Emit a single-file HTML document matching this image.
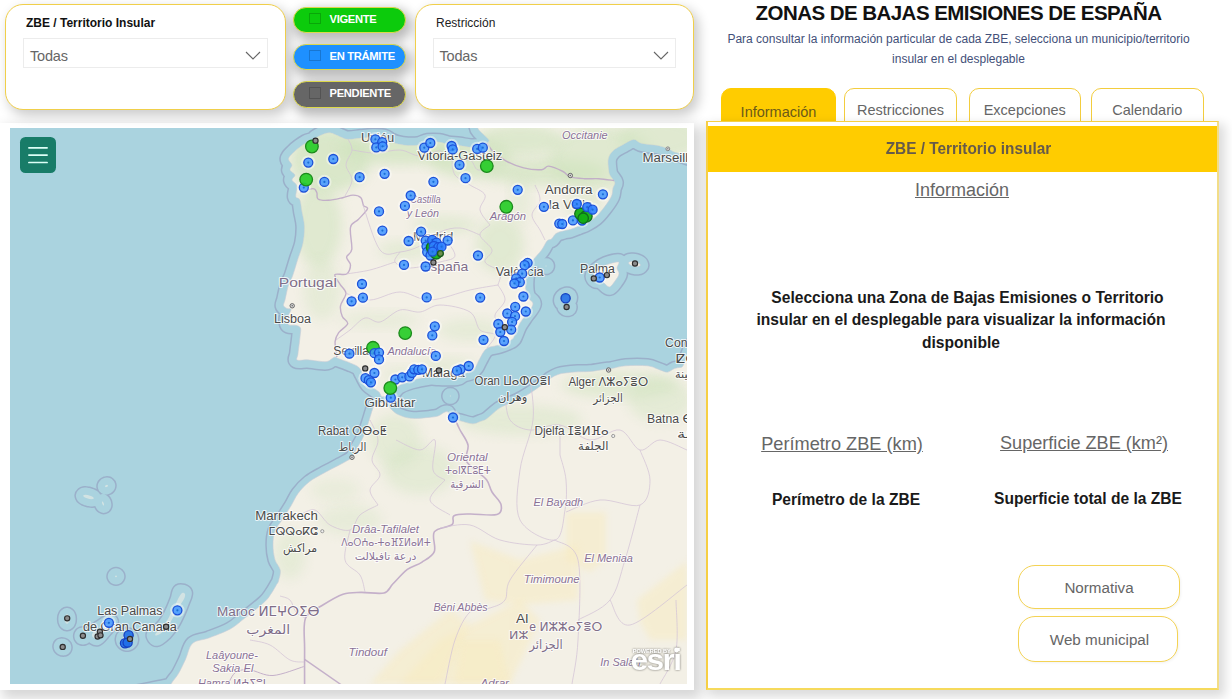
<!DOCTYPE html>
<html lang="es">
<head>
<meta charset="utf-8">
<title>Zonas de Bajas Emisiones de España</title>
<style>
*{box-sizing:border-box;margin:0;padding:0}
html,body{width:1232px;height:699px;overflow:hidden;background:#fff;font-family:"Liberation Sans",sans-serif}
.abs{position:absolute}
.box{position:absolute;background:#fff;border:1px solid #f0cf4a;border-radius:18px;box-shadow:4px 5px 12px 1px rgba(0,0,0,.2)}
.lbl{position:absolute;font-size:12px;color:#111;white-space:nowrap}
.dd{position:absolute;border:1px solid #ececec;background:#fff;height:30px}
.dd span{position:absolute;left:6px;top:9.2px;font-size:14.5px;color:#666;letter-spacing:-0.2px}
.dd svg{position:absolute;right:6px;top:12.5px}
.pill{position:absolute;left:293px;width:113px;height:26.5px;border-radius:13.5px;border:1px solid #dcd84a;box-shadow:3px 5px 11px 3px rgba(0,0,0,.27);color:#fff;font-weight:bold;font-size:11.2px;letter-spacing:-0.3px;line-height:23px;padding-left:35.5px;white-space:nowrap}
.pill i{position:absolute;left:15px;top:5px;width:12px;height:11.5px;border:1px solid rgba(0,0,0,.18)}
#title{position:absolute;left:706px;width:505px;top:0px;text-align:center;font-weight:bold;font-size:20.5px;letter-spacing:-0.55px;color:#111;white-space:nowrap;line-height:26px}
#sub{position:absolute;left:706px;width:505px;top:30px;text-align:center;font-size:12px;color:#435079;line-height:19.5px;white-space:nowrap}
.tab{position:absolute;top:87.5px;height:40px;border:1px solid #f3cd3e;border-radius:10px 10px 0 0;background:#fff;color:#666;font-size:14.5px;text-align:center;line-height:42px;white-space:nowrap}
.tab.on{background:#ffcc00;border-color:#ffcc00;line-height:46px;color:#6b5a1a}
#panel{position:absolute;left:706px;top:121.3px;width:513.2px;height:568.6px;border:2px solid #f6cf45;border-top-width:1px;border-right-color:#f2dd88;border-bottom-color:#f6da5c;background:#fff;box-shadow:4px 5px 10px 2px rgba(0,0,0,.14)}
#hdr{position:absolute;left:0;top:3.9px;width:509.2px;height:46.3px;background:#ffcc00;color:#665a4a;font-weight:bold;font-size:17px;text-align:center;line-height:45px}
#hdr span{display:inline-block;transform:scaleX(.905);position:relative;left:5.6px}
.u{position:absolute;color:#666;text-decoration:underline;white-space:nowrap;text-align:center}
.b{position:absolute;color:#1a1a1a;font-weight:bold;white-space:nowrap;text-align:center;font-size:15.6px}
.btn{position:absolute;border:1px solid #f4d354;border-radius:17px;background:#fff;color:#666;font-size:15.2px;text-align:center;box-shadow:1px 1px 3px rgba(0,0,0,.05)}
#mapframe{position:absolute;left:0;top:122.5px;width:694px;height:567.5px;background:#fff;box-shadow:5px 6px 12px 3px rgba(0,0,0,.16)}
#map{position:absolute;left:10px;top:128px;width:677px;height:556px;background:#aad3df;overflow:hidden}
</style>
</head>
<body>
<div id="mapframe"></div>
<div id="map">
<svg id="msvg" width="677" height="556" viewBox="10 128 677 556" style="position:absolute;left:0;top:0;font-family:'Liberation Sans','Noto Sans CJK SC',sans-serif">
<!--MAP-->
<defs><filter id="bl" x="-30%" y="-30%" width="160%" height="160%"><feGaussianBlur stdDeviation="6"/></filter><filter id="bl2" x="-30%" y="-30%" width="160%" height="160%"><feGaussianBlur stdDeviation="3"/></filter><clipPath id="landclip"><path d="M494.0,120.0 C458.8,123.5 491.0,136.7 489.0,141.0 C487.0,145.3 485.0,145.0 482.0,146.0 C479.0,147.0 474.8,147.3 471.0,147.2 C467.2,147.1 463.3,146.0 459.5,145.5 C455.7,145.0 451.4,144.9 448.0,144.3 C444.6,143.7 442.3,142.4 439.0,142.0 C435.7,141.6 431.4,141.5 428.0,142.0 C424.6,142.5 421.9,144.4 418.6,145.0 C415.3,145.6 411.6,145.7 408.0,145.5 C404.4,145.3 400.0,144.6 397.0,143.8 C394.0,143.1 392.2,142.1 390.0,141.0 C387.8,139.9 387.0,138.2 384.0,137.5 C381.0,136.8 375.8,136.9 372.0,137.0 C368.2,137.1 365.0,137.6 361.0,138.0 C357.0,138.4 351.5,139.5 348.0,139.3 C344.5,139.1 343.0,137.8 340.0,136.7 C337.0,135.6 333.0,133.1 330.0,132.8 C327.0,132.5 324.3,133.8 322.0,134.7 C319.7,135.6 317.5,137.0 316.0,138.0 C314.5,139.0 314.6,139.8 312.9,140.6 C311.2,141.4 308.1,141.9 306.0,143.0 C303.9,144.1 302.0,145.5 300.0,147.0 C298.0,148.5 295.9,150.0 294.0,152.0 C292.1,154.0 288.8,156.6 288.5,158.8 C288.2,161.0 291.8,163.1 292.0,165.0 C292.2,166.9 289.5,168.3 290.0,170.0 C290.5,171.7 294.7,173.3 295.0,175.0 C295.3,176.7 291.7,178.2 292.0,180.0 C292.3,181.8 296.4,183.2 297.0,186.0 C297.6,188.8 295.3,194.3 295.8,196.6 C296.3,198.9 298.9,197.4 299.9,200.0 C300.9,202.6 301.2,207.7 302.0,212.0 C302.8,216.3 304.2,220.8 304.4,226.0 C304.6,231.2 304.1,237.3 303.0,243.0 C301.9,248.7 299.2,254.5 297.5,260.0 C295.8,265.5 294.1,271.6 292.6,275.8 C291.1,280.0 289.5,282.1 288.5,285.0 C287.5,287.9 287.1,290.5 286.5,293.0 C285.9,295.5 285.5,297.9 285.0,300.0 C284.5,302.1 283.2,304.1 283.5,305.5 C283.8,306.9 285.8,307.8 287.0,308.5 C288.2,309.2 290.8,308.2 291.0,309.5 C291.2,310.8 288.6,314.0 288.0,316.0 C287.4,318.0 287.1,320.0 287.3,321.5 C287.5,323.0 287.6,324.4 289.0,325.0 C290.4,325.6 294.1,324.8 296.0,325.3 C297.9,325.8 299.8,326.4 300.5,328.0 C301.2,329.6 300.4,332.5 300.2,335.0 C300.0,337.5 299.7,339.8 299.3,343.0 C298.9,346.2 298.2,351.5 297.9,354.4 C297.5,357.2 295.6,359.2 297.2,360.1 C298.8,361.0 303.9,359.7 307.2,359.8 C310.5,359.9 313.9,360.7 317.2,361.0 C320.5,361.3 324.3,362.1 327.2,361.5 C330.1,360.9 332.5,357.7 334.4,357.2 C336.3,356.7 336.1,357.8 338.7,358.7 C341.3,359.6 346.7,361.5 350.0,362.9 C353.3,364.3 356.5,365.3 358.7,367.2 C360.9,369.1 361.3,371.5 363.0,374.4 C364.7,377.3 366.1,381.5 368.7,384.4 C371.3,387.3 376.4,389.7 378.7,391.8 C381.0,393.9 380.3,396.6 382.4,396.8 C384.5,397.1 388.6,395.1 391.3,393.3 C394.0,391.5 395.2,388.1 398.5,386.0 C401.8,383.9 405.9,382.2 411.0,380.7 C416.1,379.2 424.2,377.6 428.9,377.0 C433.5,376.4 434.2,377.2 438.9,377.3 C443.5,377.4 452.7,377.9 456.8,377.3 C460.9,376.7 460.9,374.8 463.3,373.8 C465.7,372.8 468.9,372.7 471.0,371.5 C473.1,370.3 474.4,368.6 475.8,366.6 C477.2,364.6 477.6,362.4 479.4,359.4 C481.2,356.4 483.2,351.1 486.5,348.7 C489.8,346.3 494.8,346.5 499.0,345.0 C503.2,343.5 508.9,341.6 511.6,339.8 C514.3,338.0 513.8,336.8 515.0,334.4 C516.2,332.0 516.9,328.8 518.7,325.5 C520.5,322.2 523.5,318.3 525.9,314.7 C528.3,311.1 532.8,307.0 533.0,304.0 C533.2,301.0 528.5,299.9 527.2,296.6 C526.0,293.3 525.5,288.2 525.5,284.0 C525.5,279.8 526.0,275.5 527.2,271.6 C528.4,267.7 530.2,264.4 532.6,260.8 C535.0,257.2 539.2,253.3 541.6,250.0 C544.0,246.7 545.4,242.8 547.0,241.0 C548.6,239.2 550.0,240.2 551.5,239.0 C553.0,237.8 554.1,234.8 556.0,233.5 C557.9,232.2 560.7,231.7 563.0,231.0 C565.3,230.3 567.5,230.2 570.0,229.5 C572.5,228.8 575.3,227.6 578.0,226.5 C580.7,225.4 583.4,224.5 586.3,223.0 C589.2,221.5 592.2,220.1 595.2,217.5 C598.2,214.9 601.5,210.8 604.2,207.3 C606.9,203.8 609.8,199.8 611.3,196.6 C612.8,193.4 612.4,190.3 613.0,188.0 C613.6,185.7 615.2,184.5 614.8,182.5 C614.4,180.5 611.5,177.8 610.5,176.0 C609.5,174.2 609.3,174.3 608.9,171.5 C608.5,168.7 607.6,162.3 608.3,158.9 C609.0,155.5 610.6,153.2 612.9,150.9 C615.2,148.6 618.6,147.1 622.0,145.2 C625.4,143.3 630.5,139.9 633.5,139.5 C636.5,139.1 637.6,142.1 640.3,142.9 C643.0,143.8 646.5,144.1 649.5,144.6 C652.5,145.1 655.6,145.0 658.6,145.7 C661.6,146.4 664.7,147.4 667.8,148.6 C670.9,149.8 671.6,151.6 677.0,152.8 C682.4,154.0 696.2,161.5 700.0,156.0 C703.8,150.5 734.3,126.0 700.0,120.0 C665.7,114.0 529.2,116.5 494.0,120.0Z M375.0,406.0 C376.3,405.3 379.0,402.8 381.0,402.5 C383.0,402.2 385.2,402.8 387.0,404.0 C388.8,405.2 390.1,408.2 392.0,410.0 C393.9,411.8 395.3,413.3 398.5,414.7 C401.7,416.1 405.9,417.9 411.0,418.3 C416.1,418.8 424.4,417.8 428.9,417.4 C433.4,417.0 435.5,416.8 438.0,416.0 C440.5,415.2 442.3,413.2 444.0,412.5 C445.7,411.8 447.0,411.2 448.0,412.0 C449.0,412.8 449.2,415.8 450.0,417.0 C450.8,418.2 451.3,418.4 453.0,419.0 C454.7,419.6 457.1,420.0 460.3,420.8 C463.6,421.6 469.2,423.7 472.5,423.8 C475.8,423.9 477.6,422.4 480.0,421.5 C482.4,420.6 483.6,420.8 486.7,418.7 C489.8,416.6 495.3,411.1 498.9,408.6 C502.4,406.2 504.9,405.4 508.0,404.0 C511.1,402.6 513.3,402.4 517.2,400.5 C521.1,398.6 526.7,395.4 531.4,392.3 C536.1,389.2 542.3,384.6 545.6,382.2 C548.9,379.8 548.9,379.3 551.0,378.0 C553.1,376.7 555.6,375.3 558.0,374.5 C560.4,373.7 561.9,373.4 565.2,373.0 C568.5,372.6 573.9,372.1 578.0,371.8 C582.1,371.6 585.6,371.9 590.0,371.5 C594.4,371.1 600.7,369.9 604.3,369.4 C607.9,368.9 607.9,369.2 611.5,368.6 C615.1,368.0 619.8,366.3 625.8,365.8 C631.8,365.3 641.7,365.2 647.2,365.8 C652.7,366.4 655.4,368.3 658.7,369.4 C662.1,370.5 664.7,372.3 667.3,372.2 C669.9,372.1 672.0,369.4 674.4,368.6 C676.8,367.8 677.3,367.6 681.6,367.2 C685.9,366.8 696.9,310.5 700.0,366.0 C703.1,421.5 789.5,644.3 700.0,700.0 C610.5,755.7 251.2,702.7 163.0,700.0 C74.8,697.3 168.4,688.4 171.0,684.0 C173.6,679.6 175.9,677.9 178.3,673.8 C180.7,669.7 183.1,664.5 185.5,659.4 C187.9,654.3 188.7,646.9 192.6,643.3 C196.5,639.7 202.4,640.4 208.7,638.0 C215.0,635.6 224.2,632.3 230.2,629.0 C236.2,625.7 238.8,622.8 244.5,618.3 C250.2,613.8 259.7,606.4 264.2,602.2 C268.7,598.1 269.2,596.4 271.3,593.4 C273.4,590.4 275.5,586.4 276.7,584.3 C277.9,582.2 277.9,583.2 278.5,580.9 C279.1,578.5 280.9,573.8 280.3,570.2 C279.7,566.6 276.1,563.6 274.9,559.4 C273.7,555.2 273.0,549.8 273.0,545.0 C273.0,540.2 273.4,535.0 274.9,530.8 C276.4,526.6 279.3,524.2 282.0,520.0 C284.7,515.8 288.3,510.2 291.0,505.8 C293.7,501.4 295.0,497.5 298.0,493.5 C301.0,489.5 304.7,485.4 309.0,482.0 C313.3,478.6 318.3,476.2 324.0,473.0 C329.7,469.8 338.3,465.6 343.0,463.0 C347.7,460.4 349.9,459.4 352.0,457.3 C354.1,455.2 353.7,453.7 355.5,450.5 C357.3,447.3 360.6,442.5 362.7,438.0 C364.8,433.5 366.2,428.9 368.0,423.7 C369.8,418.5 372.2,409.6 373.4,406.7 C374.6,403.8 373.7,406.7 375.0,406.0Z M593.4,276.0 C593.7,274.3 595.9,271.8 598.0,270.0 C600.1,268.2 602.6,266.3 606.0,265.0 C609.4,263.7 616.7,261.5 618.5,262.0 C620.3,262.5 616.9,266.0 617.0,268.0 C617.1,270.0 619.3,271.8 619.0,274.0 C618.7,276.2 616.6,278.8 615.0,281.0 C613.4,283.2 611.3,286.7 609.5,287.0 C607.7,287.3 605.6,284.2 604.0,283.0 C602.4,281.8 601.3,280.0 600.0,279.5 C598.7,279.0 597.1,280.6 596.0,280.0 C594.9,279.4 593.1,277.7 593.4,276.0Z M640.4,265.2 L639.6,266.1 L637.8,266.5 L635.3,266.5 L632.7,265.9 L630.5,265.0 L629.0,263.9 L628.6,262.8 L629.4,261.9 L631.2,261.5 L633.7,261.5 L636.3,262.1 L638.5,263.0 L640.0,264.1Z M568.8,296.2 L569.2,297.4 L569.0,299.0 L568.0,300.5 L566.5,301.7 L564.9,302.4 L563.3,302.4 L562.2,301.8 L561.8,300.6 L562.0,299.0 L563.0,297.5 L564.5,296.3 L566.1,295.6 L567.7,295.6Z M568.7,307.6 L568.4,308.0 L567.8,308.1 L567.0,308.1 L566.3,307.8 L565.7,307.4 L565.3,306.9 L565.3,306.4 L565.6,306.0 L566.2,305.9 L567.0,305.9 L567.7,306.2 L568.3,306.6 L568.7,307.1Z"/></clipPath></defs>
<rect x="10" y="128" width="677" height="556" fill="#aad3df"/>
<path d="M494.0,120.0 C458.8,123.5 491.0,136.7 489.0,141.0 C487.0,145.3 485.0,145.0 482.0,146.0 C479.0,147.0 474.8,147.3 471.0,147.2 C467.2,147.1 463.3,146.0 459.5,145.5 C455.7,145.0 451.4,144.9 448.0,144.3 C444.6,143.7 442.3,142.4 439.0,142.0 C435.7,141.6 431.4,141.5 428.0,142.0 C424.6,142.5 421.9,144.4 418.6,145.0 C415.3,145.6 411.6,145.7 408.0,145.5 C404.4,145.3 400.0,144.6 397.0,143.8 C394.0,143.1 392.2,142.1 390.0,141.0 C387.8,139.9 387.0,138.2 384.0,137.5 C381.0,136.8 375.8,136.9 372.0,137.0 C368.2,137.1 365.0,137.6 361.0,138.0 C357.0,138.4 351.5,139.5 348.0,139.3 C344.5,139.1 343.0,137.8 340.0,136.7 C337.0,135.6 333.0,133.1 330.0,132.8 C327.0,132.5 324.3,133.8 322.0,134.7 C319.7,135.6 317.5,137.0 316.0,138.0 C314.5,139.0 314.6,139.8 312.9,140.6 C311.2,141.4 308.1,141.9 306.0,143.0 C303.9,144.1 302.0,145.5 300.0,147.0 C298.0,148.5 295.9,150.0 294.0,152.0 C292.1,154.0 288.8,156.6 288.5,158.8 C288.2,161.0 291.8,163.1 292.0,165.0 C292.2,166.9 289.5,168.3 290.0,170.0 C290.5,171.7 294.7,173.3 295.0,175.0 C295.3,176.7 291.7,178.2 292.0,180.0 C292.3,181.8 296.4,183.2 297.0,186.0 C297.6,188.8 295.3,194.3 295.8,196.6 C296.3,198.9 298.9,197.4 299.9,200.0 C300.9,202.6 301.2,207.7 302.0,212.0 C302.8,216.3 304.2,220.8 304.4,226.0 C304.6,231.2 304.1,237.3 303.0,243.0 C301.9,248.7 299.2,254.5 297.5,260.0 C295.8,265.5 294.1,271.6 292.6,275.8 C291.1,280.0 289.5,282.1 288.5,285.0 C287.5,287.9 287.1,290.5 286.5,293.0 C285.9,295.5 285.5,297.9 285.0,300.0 C284.5,302.1 283.2,304.1 283.5,305.5 C283.8,306.9 285.8,307.8 287.0,308.5 C288.2,309.2 290.8,308.2 291.0,309.5 C291.2,310.8 288.6,314.0 288.0,316.0 C287.4,318.0 287.1,320.0 287.3,321.5 C287.5,323.0 287.6,324.4 289.0,325.0 C290.4,325.6 294.1,324.8 296.0,325.3 C297.9,325.8 299.8,326.4 300.5,328.0 C301.2,329.6 300.4,332.5 300.2,335.0 C300.0,337.5 299.7,339.8 299.3,343.0 C298.9,346.2 298.2,351.5 297.9,354.4 C297.5,357.2 295.6,359.2 297.2,360.1 C298.8,361.0 303.9,359.7 307.2,359.8 C310.5,359.9 313.9,360.7 317.2,361.0 C320.5,361.3 324.3,362.1 327.2,361.5 C330.1,360.9 332.5,357.7 334.4,357.2 C336.3,356.7 336.1,357.8 338.7,358.7 C341.3,359.6 346.7,361.5 350.0,362.9 C353.3,364.3 356.5,365.3 358.7,367.2 C360.9,369.1 361.3,371.5 363.0,374.4 C364.7,377.3 366.1,381.5 368.7,384.4 C371.3,387.3 376.4,389.7 378.7,391.8 C381.0,393.9 380.3,396.6 382.4,396.8 C384.5,397.1 388.6,395.1 391.3,393.3 C394.0,391.5 395.2,388.1 398.5,386.0 C401.8,383.9 405.9,382.2 411.0,380.7 C416.1,379.2 424.2,377.6 428.9,377.0 C433.5,376.4 434.2,377.2 438.9,377.3 C443.5,377.4 452.7,377.9 456.8,377.3 C460.9,376.7 460.9,374.8 463.3,373.8 C465.7,372.8 468.9,372.7 471.0,371.5 C473.1,370.3 474.4,368.6 475.8,366.6 C477.2,364.6 477.6,362.4 479.4,359.4 C481.2,356.4 483.2,351.1 486.5,348.7 C489.8,346.3 494.8,346.5 499.0,345.0 C503.2,343.5 508.9,341.6 511.6,339.8 C514.3,338.0 513.8,336.8 515.0,334.4 C516.2,332.0 516.9,328.8 518.7,325.5 C520.5,322.2 523.5,318.3 525.9,314.7 C528.3,311.1 532.8,307.0 533.0,304.0 C533.2,301.0 528.5,299.9 527.2,296.6 C526.0,293.3 525.5,288.2 525.5,284.0 C525.5,279.8 526.0,275.5 527.2,271.6 C528.4,267.7 530.2,264.4 532.6,260.8 C535.0,257.2 539.2,253.3 541.6,250.0 C544.0,246.7 545.4,242.8 547.0,241.0 C548.6,239.2 550.0,240.2 551.5,239.0 C553.0,237.8 554.1,234.8 556.0,233.5 C557.9,232.2 560.7,231.7 563.0,231.0 C565.3,230.3 567.5,230.2 570.0,229.5 C572.5,228.8 575.3,227.6 578.0,226.5 C580.7,225.4 583.4,224.5 586.3,223.0 C589.2,221.5 592.2,220.1 595.2,217.5 C598.2,214.9 601.5,210.8 604.2,207.3 C606.9,203.8 609.8,199.8 611.3,196.6 C612.8,193.4 612.4,190.3 613.0,188.0 C613.6,185.7 615.2,184.5 614.8,182.5 C614.4,180.5 611.5,177.8 610.5,176.0 C609.5,174.2 609.3,174.3 608.9,171.5 C608.5,168.7 607.6,162.3 608.3,158.9 C609.0,155.5 610.6,153.2 612.9,150.9 C615.2,148.6 618.6,147.1 622.0,145.2 C625.4,143.3 630.5,139.9 633.5,139.5 C636.5,139.1 637.6,142.1 640.3,142.9 C643.0,143.8 646.5,144.1 649.5,144.6 C652.5,145.1 655.6,145.0 658.6,145.7 C661.6,146.4 664.7,147.4 667.8,148.6 C670.9,149.8 671.6,151.6 677.0,152.8 C682.4,154.0 696.2,161.5 700.0,156.0 C703.8,150.5 734.3,126.0 700.0,120.0 C665.7,114.0 529.2,116.5 494.0,120.0Z M593.4,276.0 C593.7,274.3 595.9,271.8 598.0,270.0 C600.1,268.2 602.6,266.3 606.0,265.0 C609.4,263.7 616.7,261.5 618.5,262.0 C620.3,262.5 616.9,266.0 617.0,268.0 C617.1,270.0 619.3,271.8 619.0,274.0 C618.7,276.2 616.6,278.8 615.0,281.0 C613.4,283.2 611.3,286.7 609.5,287.0 C607.7,287.3 605.6,284.2 604.0,283.0 C602.4,281.8 601.3,280.0 600.0,279.5 C598.7,279.0 597.1,280.6 596.0,280.0 C594.9,279.4 593.1,277.7 593.4,276.0Z M640.4,265.2 L639.6,266.1 L637.8,266.5 L635.3,266.5 L632.7,265.9 L630.5,265.0 L629.0,263.9 L628.6,262.8 L629.4,261.9 L631.2,261.5 L633.7,261.5 L636.3,262.1 L638.5,263.0 L640.0,264.1Z M568.8,296.2 L569.2,297.4 L569.0,299.0 L568.0,300.5 L566.5,301.7 L564.9,302.4 L563.3,302.4 L562.2,301.8 L561.8,300.6 L562.0,299.0 L563.0,297.5 L564.5,296.3 L566.1,295.6 L567.7,295.6Z M568.7,307.6 L568.4,308.0 L567.8,308.1 L567.0,308.1 L566.3,307.8 L565.7,307.4 L565.3,306.9 L565.3,306.4 L565.6,306.0 L566.2,305.9 L567.0,305.9 L567.7,306.2 L568.3,306.6 L568.7,307.1Z" fill="none" stroke="#9bb0ca" stroke-width="18.5" stroke-linejoin="round"/>
<path d="M375.0,406.0 C376.3,405.3 379.0,402.8 381.0,402.5 C383.0,402.2 385.2,402.8 387.0,404.0 C388.8,405.2 390.1,408.2 392.0,410.0 C393.9,411.8 395.3,413.3 398.5,414.7 C401.7,416.1 405.9,417.9 411.0,418.3 C416.1,418.8 424.4,417.8 428.9,417.4 C433.4,417.0 435.5,416.8 438.0,416.0 C440.5,415.2 442.3,413.2 444.0,412.5 C445.7,411.8 447.0,411.2 448.0,412.0 C449.0,412.8 449.2,415.8 450.0,417.0 C450.8,418.2 451.3,418.4 453.0,419.0 C454.7,419.6 457.1,420.0 460.3,420.8 C463.6,421.6 469.2,423.7 472.5,423.8 C475.8,423.9 477.6,422.4 480.0,421.5 C482.4,420.6 483.6,420.8 486.7,418.7 C489.8,416.6 495.3,411.1 498.9,408.6 C502.4,406.2 504.9,405.4 508.0,404.0 C511.1,402.6 513.3,402.4 517.2,400.5 C521.1,398.6 526.7,395.4 531.4,392.3 C536.1,389.2 542.3,384.6 545.6,382.2 C548.9,379.8 548.9,379.3 551.0,378.0 C553.1,376.7 555.6,375.3 558.0,374.5 C560.4,373.7 561.9,373.4 565.2,373.0 C568.5,372.6 573.9,372.1 578.0,371.8 C582.1,371.6 585.6,371.9 590.0,371.5 C594.4,371.1 600.7,369.9 604.3,369.4 C607.9,368.9 607.9,369.2 611.5,368.6 C615.1,368.0 619.8,366.3 625.8,365.8 C631.8,365.3 641.7,365.2 647.2,365.8 C652.7,366.4 655.4,368.3 658.7,369.4 C662.1,370.5 664.7,372.3 667.3,372.2 C669.9,372.1 672.0,369.4 674.4,368.6 C676.8,367.8 677.3,367.6 681.6,367.2 C685.9,366.8 696.9,310.5 700.0,366.0 C703.1,421.5 789.5,644.3 700.0,700.0 C610.5,755.7 251.2,702.7 163.0,700.0 C74.8,697.3 168.4,688.4 171.0,684.0 C173.6,679.6 175.9,677.9 178.3,673.8 C180.7,669.7 183.1,664.5 185.5,659.4 C187.9,654.3 188.7,646.9 192.6,643.3 C196.5,639.7 202.4,640.4 208.7,638.0 C215.0,635.6 224.2,632.3 230.2,629.0 C236.2,625.7 238.8,622.8 244.5,618.3 C250.2,613.8 259.7,606.4 264.2,602.2 C268.7,598.1 269.2,596.4 271.3,593.4 C273.4,590.4 275.5,586.4 276.7,584.3 C277.9,582.2 277.9,583.2 278.5,580.9 C279.1,578.5 280.9,573.8 280.3,570.2 C279.7,566.6 276.1,563.6 274.9,559.4 C273.7,555.2 273.0,549.8 273.0,545.0 C273.0,540.2 273.4,535.0 274.9,530.8 C276.4,526.6 279.3,524.2 282.0,520.0 C284.7,515.8 288.3,510.2 291.0,505.8 C293.7,501.4 295.0,497.5 298.0,493.5 C301.0,489.5 304.7,485.4 309.0,482.0 C313.3,478.6 318.3,476.2 324.0,473.0 C329.7,469.8 338.3,465.6 343.0,463.0 C347.7,460.4 349.9,459.4 352.0,457.3 C354.1,455.2 353.7,453.7 355.5,450.5 C357.3,447.3 360.6,442.5 362.7,438.0 C364.8,433.5 366.2,428.9 368.0,423.7 C369.8,418.5 372.2,409.6 373.4,406.7 C374.6,403.8 373.7,406.7 375.0,406.0Z" fill="none" stroke="#9bb0ca" stroke-width="15.5" stroke-linejoin="round"/>
<path d="M93.8,498.4 L93.1,499.0 L91.5,499.2 L89.3,498.9 L86.9,498.3 L84.8,497.4 L83.5,496.4 L83.2,495.6 L83.9,495.0 L85.5,494.8 L87.7,495.1 L90.1,495.7 L92.2,496.6 L93.5,497.6Z M107.9,485.2 L108.0,485.7 L107.8,486.2 L107.3,486.7 L106.7,487.0 L106.0,487.2 L105.5,487.1 L105.1,486.8 L105.0,486.3 L105.2,485.8 L105.7,485.3 L106.3,485.0 L107.0,484.8 L107.5,484.9Z M103.8,503.2 L104.0,504.2 L104.1,504.9 L103.9,505.5 L103.6,505.6 L103.1,505.3 L102.6,504.6 L102.2,503.8 L102.0,502.8 L101.9,502.1 L102.1,501.5 L102.4,501.4 L102.9,501.7 L103.4,502.4Z M117.0,576.4 L116.9,576.7 L116.6,577.0 L116.2,577.2 L115.8,577.2 L115.4,577.0 L115.1,576.7 L115.0,576.4 L115.1,576.1 L115.4,575.8 L115.8,575.6 L116.2,575.6 L116.6,575.8 L116.9,576.1Z M451.0,396.0 L450.9,396.3 L450.8,396.5 L450.5,396.6 L450.3,396.6 L450.0,396.5 L449.9,396.3 L449.8,396.0 L449.9,395.7 L450.0,395.5 L450.3,395.4 L450.5,395.4 L450.8,395.5 L450.9,395.7Z M546.6,266.0 L546.5,266.3 L546.4,266.5 L546.1,266.6 L545.9,266.6 L545.6,266.5 L545.5,266.3 L545.4,266.0 L545.5,265.7 L545.6,265.5 L545.9,265.4 L546.1,265.4 L546.4,265.5 L546.5,265.7Z" fill="none" stroke="#9bb0ca" stroke-width="17.5" stroke-linejoin="round"/>
<path d="M69.4,619.0 L69.2,621.1 L68.5,622.8 L67.5,623.7 L66.5,623.7 L65.5,622.8 L64.8,621.1 L64.6,619.0 L64.8,616.9 L65.5,615.2 L66.5,614.3 L67.5,614.3 L68.5,615.2 L69.2,616.9Z M64.9,648.4 L64.3,649.0 L63.2,649.2 L62.1,649.0 L61.0,648.4 L60.2,647.5 L59.9,646.5 L60.1,645.6 L60.7,645.0 L61.8,644.8 L62.9,645.0 L64.0,645.6 L64.8,646.5 L65.1,647.5Z M85.4,636.0 L85.2,637.0 L84.5,637.9 L83.5,638.3 L82.5,638.3 L81.5,637.9 L80.8,637.0 L80.6,636.0 L80.8,635.0 L81.5,634.1 L82.5,633.7 L83.5,633.7 L84.5,634.1 L85.2,635.0Z M92.0,636.0 C92.5,637.3 95.2,639.5 97.0,639.0 C98.8,638.5 100.7,635.7 103.0,633.0 C105.3,630.3 110.0,625.0 111.0,623.0 C112.0,621.0 110.8,620.3 109.0,621.0 C107.2,621.7 102.5,625.3 100.0,627.0 C97.5,628.7 95.3,629.5 94.0,631.0 C92.7,632.5 91.5,634.7 92.0,636.0Z M131.8,639.5 L131.3,641.6 L130.0,643.3 L128.1,644.2 L125.9,644.2 L124.0,643.3 L122.7,641.6 L122.2,639.5 L122.7,637.4 L124.0,635.7 L125.9,634.8 L128.1,634.8 L130.0,635.7 L131.3,637.4Z M156.9,639.6 C159.0,639.4 162.6,635.9 165.3,633.3 C167.9,630.6 170.4,627.3 172.7,623.7 C175.0,620.0 177.2,615.1 178.9,611.3 C180.6,607.6 181.9,604.1 183.0,601.1 C184.1,598.0 186.1,594.6 185.6,593.0 C185.0,591.3 180.9,590.1 179.4,591.0 C178.0,592.0 178.1,596.0 177.0,598.9 C175.9,601.9 174.7,605.1 173.1,608.7 C171.5,612.2 169.3,617.0 167.3,620.3 C165.2,623.7 163.1,626.4 160.7,628.7 C158.4,631.1 153.7,632.6 153.1,634.4 C152.4,636.2 154.9,639.8 156.9,639.6Z" fill="none" stroke="#9bb0ca" stroke-width="15.5" stroke-linejoin="round"/>
<path d="M494.0,120.0 C458.8,123.5 491.0,136.7 489.0,141.0 C487.0,145.3 485.0,145.0 482.0,146.0 C479.0,147.0 474.8,147.3 471.0,147.2 C467.2,147.1 463.3,146.0 459.5,145.5 C455.7,145.0 451.4,144.9 448.0,144.3 C444.6,143.7 442.3,142.4 439.0,142.0 C435.7,141.6 431.4,141.5 428.0,142.0 C424.6,142.5 421.9,144.4 418.6,145.0 C415.3,145.6 411.6,145.7 408.0,145.5 C404.4,145.3 400.0,144.6 397.0,143.8 C394.0,143.1 392.2,142.1 390.0,141.0 C387.8,139.9 387.0,138.2 384.0,137.5 C381.0,136.8 375.8,136.9 372.0,137.0 C368.2,137.1 365.0,137.6 361.0,138.0 C357.0,138.4 351.5,139.5 348.0,139.3 C344.5,139.1 343.0,137.8 340.0,136.7 C337.0,135.6 333.0,133.1 330.0,132.8 C327.0,132.5 324.3,133.8 322.0,134.7 C319.7,135.6 317.5,137.0 316.0,138.0 C314.5,139.0 314.6,139.8 312.9,140.6 C311.2,141.4 308.1,141.9 306.0,143.0 C303.9,144.1 302.0,145.5 300.0,147.0 C298.0,148.5 295.9,150.0 294.0,152.0 C292.1,154.0 288.8,156.6 288.5,158.8 C288.2,161.0 291.8,163.1 292.0,165.0 C292.2,166.9 289.5,168.3 290.0,170.0 C290.5,171.7 294.7,173.3 295.0,175.0 C295.3,176.7 291.7,178.2 292.0,180.0 C292.3,181.8 296.4,183.2 297.0,186.0 C297.6,188.8 295.3,194.3 295.8,196.6 C296.3,198.9 298.9,197.4 299.9,200.0 C300.9,202.6 301.2,207.7 302.0,212.0 C302.8,216.3 304.2,220.8 304.4,226.0 C304.6,231.2 304.1,237.3 303.0,243.0 C301.9,248.7 299.2,254.5 297.5,260.0 C295.8,265.5 294.1,271.6 292.6,275.8 C291.1,280.0 289.5,282.1 288.5,285.0 C287.5,287.9 287.1,290.5 286.5,293.0 C285.9,295.5 285.5,297.9 285.0,300.0 C284.5,302.1 283.2,304.1 283.5,305.5 C283.8,306.9 285.8,307.8 287.0,308.5 C288.2,309.2 290.8,308.2 291.0,309.5 C291.2,310.8 288.6,314.0 288.0,316.0 C287.4,318.0 287.1,320.0 287.3,321.5 C287.5,323.0 287.6,324.4 289.0,325.0 C290.4,325.6 294.1,324.8 296.0,325.3 C297.9,325.8 299.8,326.4 300.5,328.0 C301.2,329.6 300.4,332.5 300.2,335.0 C300.0,337.5 299.7,339.8 299.3,343.0 C298.9,346.2 298.2,351.5 297.9,354.4 C297.5,357.2 295.6,359.2 297.2,360.1 C298.8,361.0 303.9,359.7 307.2,359.8 C310.5,359.9 313.9,360.7 317.2,361.0 C320.5,361.3 324.3,362.1 327.2,361.5 C330.1,360.9 332.5,357.7 334.4,357.2 C336.3,356.7 336.1,357.8 338.7,358.7 C341.3,359.6 346.7,361.5 350.0,362.9 C353.3,364.3 356.5,365.3 358.7,367.2 C360.9,369.1 361.3,371.5 363.0,374.4 C364.7,377.3 366.1,381.5 368.7,384.4 C371.3,387.3 376.4,389.7 378.7,391.8 C381.0,393.9 380.3,396.6 382.4,396.8 C384.5,397.1 388.6,395.1 391.3,393.3 C394.0,391.5 395.2,388.1 398.5,386.0 C401.8,383.9 405.9,382.2 411.0,380.7 C416.1,379.2 424.2,377.6 428.9,377.0 C433.5,376.4 434.2,377.2 438.9,377.3 C443.5,377.4 452.7,377.9 456.8,377.3 C460.9,376.7 460.9,374.8 463.3,373.8 C465.7,372.8 468.9,372.7 471.0,371.5 C473.1,370.3 474.4,368.6 475.8,366.6 C477.2,364.6 477.6,362.4 479.4,359.4 C481.2,356.4 483.2,351.1 486.5,348.7 C489.8,346.3 494.8,346.5 499.0,345.0 C503.2,343.5 508.9,341.6 511.6,339.8 C514.3,338.0 513.8,336.8 515.0,334.4 C516.2,332.0 516.9,328.8 518.7,325.5 C520.5,322.2 523.5,318.3 525.9,314.7 C528.3,311.1 532.8,307.0 533.0,304.0 C533.2,301.0 528.5,299.9 527.2,296.6 C526.0,293.3 525.5,288.2 525.5,284.0 C525.5,279.8 526.0,275.5 527.2,271.6 C528.4,267.7 530.2,264.4 532.6,260.8 C535.0,257.2 539.2,253.3 541.6,250.0 C544.0,246.7 545.4,242.8 547.0,241.0 C548.6,239.2 550.0,240.2 551.5,239.0 C553.0,237.8 554.1,234.8 556.0,233.5 C557.9,232.2 560.7,231.7 563.0,231.0 C565.3,230.3 567.5,230.2 570.0,229.5 C572.5,228.8 575.3,227.6 578.0,226.5 C580.7,225.4 583.4,224.5 586.3,223.0 C589.2,221.5 592.2,220.1 595.2,217.5 C598.2,214.9 601.5,210.8 604.2,207.3 C606.9,203.8 609.8,199.8 611.3,196.6 C612.8,193.4 612.4,190.3 613.0,188.0 C613.6,185.7 615.2,184.5 614.8,182.5 C614.4,180.5 611.5,177.8 610.5,176.0 C609.5,174.2 609.3,174.3 608.9,171.5 C608.5,168.7 607.6,162.3 608.3,158.9 C609.0,155.5 610.6,153.2 612.9,150.9 C615.2,148.6 618.6,147.1 622.0,145.2 C625.4,143.3 630.5,139.9 633.5,139.5 C636.5,139.1 637.6,142.1 640.3,142.9 C643.0,143.8 646.5,144.1 649.5,144.6 C652.5,145.1 655.6,145.0 658.6,145.7 C661.6,146.4 664.7,147.4 667.8,148.6 C670.9,149.8 671.6,151.6 677.0,152.8 C682.4,154.0 696.2,161.5 700.0,156.0 C703.8,150.5 734.3,126.0 700.0,120.0 C665.7,114.0 529.2,116.5 494.0,120.0Z M593.4,276.0 C593.7,274.3 595.9,271.8 598.0,270.0 C600.1,268.2 602.6,266.3 606.0,265.0 C609.4,263.7 616.7,261.5 618.5,262.0 C620.3,262.5 616.9,266.0 617.0,268.0 C617.1,270.0 619.3,271.8 619.0,274.0 C618.7,276.2 616.6,278.8 615.0,281.0 C613.4,283.2 611.3,286.7 609.5,287.0 C607.7,287.3 605.6,284.2 604.0,283.0 C602.4,281.8 601.3,280.0 600.0,279.5 C598.7,279.0 597.1,280.6 596.0,280.0 C594.9,279.4 593.1,277.7 593.4,276.0Z M640.4,265.2 L639.6,266.1 L637.8,266.5 L635.3,266.5 L632.7,265.9 L630.5,265.0 L629.0,263.9 L628.6,262.8 L629.4,261.9 L631.2,261.5 L633.7,261.5 L636.3,262.1 L638.5,263.0 L640.0,264.1Z M568.8,296.2 L569.2,297.4 L569.0,299.0 L568.0,300.5 L566.5,301.7 L564.9,302.4 L563.3,302.4 L562.2,301.8 L561.8,300.6 L562.0,299.0 L563.0,297.5 L564.5,296.3 L566.1,295.6 L567.7,295.6Z M568.7,307.6 L568.4,308.0 L567.8,308.1 L567.0,308.1 L566.3,307.8 L565.7,307.4 L565.3,306.9 L565.3,306.4 L565.6,306.0 L566.2,305.9 L567.0,305.9 L567.7,306.2 L568.3,306.6 L568.7,307.1Z" fill="#aad3df" stroke="#aad3df" stroke-width="15.5" stroke-linejoin="round"/>
<path d="M375.0,406.0 C376.3,405.3 379.0,402.8 381.0,402.5 C383.0,402.2 385.2,402.8 387.0,404.0 C388.8,405.2 390.1,408.2 392.0,410.0 C393.9,411.8 395.3,413.3 398.5,414.7 C401.7,416.1 405.9,417.9 411.0,418.3 C416.1,418.8 424.4,417.8 428.9,417.4 C433.4,417.0 435.5,416.8 438.0,416.0 C440.5,415.2 442.3,413.2 444.0,412.5 C445.7,411.8 447.0,411.2 448.0,412.0 C449.0,412.8 449.2,415.8 450.0,417.0 C450.8,418.2 451.3,418.4 453.0,419.0 C454.7,419.6 457.1,420.0 460.3,420.8 C463.6,421.6 469.2,423.7 472.5,423.8 C475.8,423.9 477.6,422.4 480.0,421.5 C482.4,420.6 483.6,420.8 486.7,418.7 C489.8,416.6 495.3,411.1 498.9,408.6 C502.4,406.2 504.9,405.4 508.0,404.0 C511.1,402.6 513.3,402.4 517.2,400.5 C521.1,398.6 526.7,395.4 531.4,392.3 C536.1,389.2 542.3,384.6 545.6,382.2 C548.9,379.8 548.9,379.3 551.0,378.0 C553.1,376.7 555.6,375.3 558.0,374.5 C560.4,373.7 561.9,373.4 565.2,373.0 C568.5,372.6 573.9,372.1 578.0,371.8 C582.1,371.6 585.6,371.9 590.0,371.5 C594.4,371.1 600.7,369.9 604.3,369.4 C607.9,368.9 607.9,369.2 611.5,368.6 C615.1,368.0 619.8,366.3 625.8,365.8 C631.8,365.3 641.7,365.2 647.2,365.8 C652.7,366.4 655.4,368.3 658.7,369.4 C662.1,370.5 664.7,372.3 667.3,372.2 C669.9,372.1 672.0,369.4 674.4,368.6 C676.8,367.8 677.3,367.6 681.6,367.2 C685.9,366.8 696.9,310.5 700.0,366.0 C703.1,421.5 789.5,644.3 700.0,700.0 C610.5,755.7 251.2,702.7 163.0,700.0 C74.8,697.3 168.4,688.4 171.0,684.0 C173.6,679.6 175.9,677.9 178.3,673.8 C180.7,669.7 183.1,664.5 185.5,659.4 C187.9,654.3 188.7,646.9 192.6,643.3 C196.5,639.7 202.4,640.4 208.7,638.0 C215.0,635.6 224.2,632.3 230.2,629.0 C236.2,625.7 238.8,622.8 244.5,618.3 C250.2,613.8 259.7,606.4 264.2,602.2 C268.7,598.1 269.2,596.4 271.3,593.4 C273.4,590.4 275.5,586.4 276.7,584.3 C277.9,582.2 277.9,583.2 278.5,580.9 C279.1,578.5 280.9,573.8 280.3,570.2 C279.7,566.6 276.1,563.6 274.9,559.4 C273.7,555.2 273.0,549.8 273.0,545.0 C273.0,540.2 273.4,535.0 274.9,530.8 C276.4,526.6 279.3,524.2 282.0,520.0 C284.7,515.8 288.3,510.2 291.0,505.8 C293.7,501.4 295.0,497.5 298.0,493.5 C301.0,489.5 304.7,485.4 309.0,482.0 C313.3,478.6 318.3,476.2 324.0,473.0 C329.7,469.8 338.3,465.6 343.0,463.0 C347.7,460.4 349.9,459.4 352.0,457.3 C354.1,455.2 353.7,453.7 355.5,450.5 C357.3,447.3 360.6,442.5 362.7,438.0 C364.8,433.5 366.2,428.9 368.0,423.7 C369.8,418.5 372.2,409.6 373.4,406.7 C374.6,403.8 373.7,406.7 375.0,406.0Z" fill="#aad3df" stroke="#aad3df" stroke-width="12.5" stroke-linejoin="round"/>
<path d="M93.8,498.4 L93.1,499.0 L91.5,499.2 L89.3,498.9 L86.9,498.3 L84.8,497.4 L83.5,496.4 L83.2,495.6 L83.9,495.0 L85.5,494.8 L87.7,495.1 L90.1,495.7 L92.2,496.6 L93.5,497.6Z M107.9,485.2 L108.0,485.7 L107.8,486.2 L107.3,486.7 L106.7,487.0 L106.0,487.2 L105.5,487.1 L105.1,486.8 L105.0,486.3 L105.2,485.8 L105.7,485.3 L106.3,485.0 L107.0,484.8 L107.5,484.9Z M103.8,503.2 L104.0,504.2 L104.1,504.9 L103.9,505.5 L103.6,505.6 L103.1,505.3 L102.6,504.6 L102.2,503.8 L102.0,502.8 L101.9,502.1 L102.1,501.5 L102.4,501.4 L102.9,501.7 L103.4,502.4Z M117.0,576.4 L116.9,576.7 L116.6,577.0 L116.2,577.2 L115.8,577.2 L115.4,577.0 L115.1,576.7 L115.0,576.4 L115.1,576.1 L115.4,575.8 L115.8,575.6 L116.2,575.6 L116.6,575.8 L116.9,576.1Z M451.0,396.0 L450.9,396.3 L450.8,396.5 L450.5,396.6 L450.3,396.6 L450.0,396.5 L449.9,396.3 L449.8,396.0 L449.9,395.7 L450.0,395.5 L450.3,395.4 L450.5,395.4 L450.8,395.5 L450.9,395.7Z M546.6,266.0 L546.5,266.3 L546.4,266.5 L546.1,266.6 L545.9,266.6 L545.6,266.5 L545.5,266.3 L545.4,266.0 L545.5,265.7 L545.6,265.5 L545.9,265.4 L546.1,265.4 L546.4,265.5 L546.5,265.7Z" fill="#aad3df" stroke="#aad3df" stroke-width="14.5" stroke-linejoin="round"/>
<path d="M69.4,619.0 L69.2,621.1 L68.5,622.8 L67.5,623.7 L66.5,623.7 L65.5,622.8 L64.8,621.1 L64.6,619.0 L64.8,616.9 L65.5,615.2 L66.5,614.3 L67.5,614.3 L68.5,615.2 L69.2,616.9Z M64.9,648.4 L64.3,649.0 L63.2,649.2 L62.1,649.0 L61.0,648.4 L60.2,647.5 L59.9,646.5 L60.1,645.6 L60.7,645.0 L61.8,644.8 L62.9,645.0 L64.0,645.6 L64.8,646.5 L65.1,647.5Z M85.4,636.0 L85.2,637.0 L84.5,637.9 L83.5,638.3 L82.5,638.3 L81.5,637.9 L80.8,637.0 L80.6,636.0 L80.8,635.0 L81.5,634.1 L82.5,633.7 L83.5,633.7 L84.5,634.1 L85.2,635.0Z M92.0,636.0 C92.5,637.3 95.2,639.5 97.0,639.0 C98.8,638.5 100.7,635.7 103.0,633.0 C105.3,630.3 110.0,625.0 111.0,623.0 C112.0,621.0 110.8,620.3 109.0,621.0 C107.2,621.7 102.5,625.3 100.0,627.0 C97.5,628.7 95.3,629.5 94.0,631.0 C92.7,632.5 91.5,634.7 92.0,636.0Z M131.8,639.5 L131.3,641.6 L130.0,643.3 L128.1,644.2 L125.9,644.2 L124.0,643.3 L122.7,641.6 L122.2,639.5 L122.7,637.4 L124.0,635.7 L125.9,634.8 L128.1,634.8 L130.0,635.7 L131.3,637.4Z M156.9,639.6 C159.0,639.4 162.6,635.9 165.3,633.3 C167.9,630.6 170.4,627.3 172.7,623.7 C175.0,620.0 177.2,615.1 178.9,611.3 C180.6,607.6 181.9,604.1 183.0,601.1 C184.1,598.0 186.1,594.6 185.6,593.0 C185.0,591.3 180.9,590.1 179.4,591.0 C178.0,592.0 178.1,596.0 177.0,598.9 C175.9,601.9 174.7,605.1 173.1,608.7 C171.5,612.2 169.3,617.0 167.3,620.3 C165.2,623.7 163.1,626.4 160.7,628.7 C158.4,631.1 153.7,632.6 153.1,634.4 C152.4,636.2 154.9,639.8 156.9,639.6Z" fill="#aad3df" stroke="#aad3df" stroke-width="12.5" stroke-linejoin="round"/>
<path d="M494.0,120.0 C458.8,123.5 491.0,136.7 489.0,141.0 C487.0,145.3 485.0,145.0 482.0,146.0 C479.0,147.0 474.8,147.3 471.0,147.2 C467.2,147.1 463.3,146.0 459.5,145.5 C455.7,145.0 451.4,144.9 448.0,144.3 C444.6,143.7 442.3,142.4 439.0,142.0 C435.7,141.6 431.4,141.5 428.0,142.0 C424.6,142.5 421.9,144.4 418.6,145.0 C415.3,145.6 411.6,145.7 408.0,145.5 C404.4,145.3 400.0,144.6 397.0,143.8 C394.0,143.1 392.2,142.1 390.0,141.0 C387.8,139.9 387.0,138.2 384.0,137.5 C381.0,136.8 375.8,136.9 372.0,137.0 C368.2,137.1 365.0,137.6 361.0,138.0 C357.0,138.4 351.5,139.5 348.0,139.3 C344.5,139.1 343.0,137.8 340.0,136.7 C337.0,135.6 333.0,133.1 330.0,132.8 C327.0,132.5 324.3,133.8 322.0,134.7 C319.7,135.6 317.5,137.0 316.0,138.0 C314.5,139.0 314.6,139.8 312.9,140.6 C311.2,141.4 308.1,141.9 306.0,143.0 C303.9,144.1 302.0,145.5 300.0,147.0 C298.0,148.5 295.9,150.0 294.0,152.0 C292.1,154.0 288.8,156.6 288.5,158.8 C288.2,161.0 291.8,163.1 292.0,165.0 C292.2,166.9 289.5,168.3 290.0,170.0 C290.5,171.7 294.7,173.3 295.0,175.0 C295.3,176.7 291.7,178.2 292.0,180.0 C292.3,181.8 296.4,183.2 297.0,186.0 C297.6,188.8 295.3,194.3 295.8,196.6 C296.3,198.9 298.9,197.4 299.9,200.0 C300.9,202.6 301.2,207.7 302.0,212.0 C302.8,216.3 304.2,220.8 304.4,226.0 C304.6,231.2 304.1,237.3 303.0,243.0 C301.9,248.7 299.2,254.5 297.5,260.0 C295.8,265.5 294.1,271.6 292.6,275.8 C291.1,280.0 289.5,282.1 288.5,285.0 C287.5,287.9 287.1,290.5 286.5,293.0 C285.9,295.5 285.5,297.9 285.0,300.0 C284.5,302.1 283.2,304.1 283.5,305.5 C283.8,306.9 285.8,307.8 287.0,308.5 C288.2,309.2 290.8,308.2 291.0,309.5 C291.2,310.8 288.6,314.0 288.0,316.0 C287.4,318.0 287.1,320.0 287.3,321.5 C287.5,323.0 287.6,324.4 289.0,325.0 C290.4,325.6 294.1,324.8 296.0,325.3 C297.9,325.8 299.8,326.4 300.5,328.0 C301.2,329.6 300.4,332.5 300.2,335.0 C300.0,337.5 299.7,339.8 299.3,343.0 C298.9,346.2 298.2,351.5 297.9,354.4 C297.5,357.2 295.6,359.2 297.2,360.1 C298.8,361.0 303.9,359.7 307.2,359.8 C310.5,359.9 313.9,360.7 317.2,361.0 C320.5,361.3 324.3,362.1 327.2,361.5 C330.1,360.9 332.5,357.7 334.4,357.2 C336.3,356.7 336.1,357.8 338.7,358.7 C341.3,359.6 346.7,361.5 350.0,362.9 C353.3,364.3 356.5,365.3 358.7,367.2 C360.9,369.1 361.3,371.5 363.0,374.4 C364.7,377.3 366.1,381.5 368.7,384.4 C371.3,387.3 376.4,389.7 378.7,391.8 C381.0,393.9 380.3,396.6 382.4,396.8 C384.5,397.1 388.6,395.1 391.3,393.3 C394.0,391.5 395.2,388.1 398.5,386.0 C401.8,383.9 405.9,382.2 411.0,380.7 C416.1,379.2 424.2,377.6 428.9,377.0 C433.5,376.4 434.2,377.2 438.9,377.3 C443.5,377.4 452.7,377.9 456.8,377.3 C460.9,376.7 460.9,374.8 463.3,373.8 C465.7,372.8 468.9,372.7 471.0,371.5 C473.1,370.3 474.4,368.6 475.8,366.6 C477.2,364.6 477.6,362.4 479.4,359.4 C481.2,356.4 483.2,351.1 486.5,348.7 C489.8,346.3 494.8,346.5 499.0,345.0 C503.2,343.5 508.9,341.6 511.6,339.8 C514.3,338.0 513.8,336.8 515.0,334.4 C516.2,332.0 516.9,328.8 518.7,325.5 C520.5,322.2 523.5,318.3 525.9,314.7 C528.3,311.1 532.8,307.0 533.0,304.0 C533.2,301.0 528.5,299.9 527.2,296.6 C526.0,293.3 525.5,288.2 525.5,284.0 C525.5,279.8 526.0,275.5 527.2,271.6 C528.4,267.7 530.2,264.4 532.6,260.8 C535.0,257.2 539.2,253.3 541.6,250.0 C544.0,246.7 545.4,242.8 547.0,241.0 C548.6,239.2 550.0,240.2 551.5,239.0 C553.0,237.8 554.1,234.8 556.0,233.5 C557.9,232.2 560.7,231.7 563.0,231.0 C565.3,230.3 567.5,230.2 570.0,229.5 C572.5,228.8 575.3,227.6 578.0,226.5 C580.7,225.4 583.4,224.5 586.3,223.0 C589.2,221.5 592.2,220.1 595.2,217.5 C598.2,214.9 601.5,210.8 604.2,207.3 C606.9,203.8 609.8,199.8 611.3,196.6 C612.8,193.4 612.4,190.3 613.0,188.0 C613.6,185.7 615.2,184.5 614.8,182.5 C614.4,180.5 611.5,177.8 610.5,176.0 C609.5,174.2 609.3,174.3 608.9,171.5 C608.5,168.7 607.6,162.3 608.3,158.9 C609.0,155.5 610.6,153.2 612.9,150.9 C615.2,148.6 618.6,147.1 622.0,145.2 C625.4,143.3 630.5,139.9 633.5,139.5 C636.5,139.1 637.6,142.1 640.3,142.9 C643.0,143.8 646.5,144.1 649.5,144.6 C652.5,145.1 655.6,145.0 658.6,145.7 C661.6,146.4 664.7,147.4 667.8,148.6 C670.9,149.8 671.6,151.6 677.0,152.8 C682.4,154.0 696.2,161.5 700.0,156.0 C703.8,150.5 734.3,126.0 700.0,120.0 C665.7,114.0 529.2,116.5 494.0,120.0Z M375.0,406.0 C376.3,405.3 379.0,402.8 381.0,402.5 C383.0,402.2 385.2,402.8 387.0,404.0 C388.8,405.2 390.1,408.2 392.0,410.0 C393.9,411.8 395.3,413.3 398.5,414.7 C401.7,416.1 405.9,417.9 411.0,418.3 C416.1,418.8 424.4,417.8 428.9,417.4 C433.4,417.0 435.5,416.8 438.0,416.0 C440.5,415.2 442.3,413.2 444.0,412.5 C445.7,411.8 447.0,411.2 448.0,412.0 C449.0,412.8 449.2,415.8 450.0,417.0 C450.8,418.2 451.3,418.4 453.0,419.0 C454.7,419.6 457.1,420.0 460.3,420.8 C463.6,421.6 469.2,423.7 472.5,423.8 C475.8,423.9 477.6,422.4 480.0,421.5 C482.4,420.6 483.6,420.8 486.7,418.7 C489.8,416.6 495.3,411.1 498.9,408.6 C502.4,406.2 504.9,405.4 508.0,404.0 C511.1,402.6 513.3,402.4 517.2,400.5 C521.1,398.6 526.7,395.4 531.4,392.3 C536.1,389.2 542.3,384.6 545.6,382.2 C548.9,379.8 548.9,379.3 551.0,378.0 C553.1,376.7 555.6,375.3 558.0,374.5 C560.4,373.7 561.9,373.4 565.2,373.0 C568.5,372.6 573.9,372.1 578.0,371.8 C582.1,371.6 585.6,371.9 590.0,371.5 C594.4,371.1 600.7,369.9 604.3,369.4 C607.9,368.9 607.9,369.2 611.5,368.6 C615.1,368.0 619.8,366.3 625.8,365.8 C631.8,365.3 641.7,365.2 647.2,365.8 C652.7,366.4 655.4,368.3 658.7,369.4 C662.1,370.5 664.7,372.3 667.3,372.2 C669.9,372.1 672.0,369.4 674.4,368.6 C676.8,367.8 677.3,367.6 681.6,367.2 C685.9,366.8 696.9,310.5 700.0,366.0 C703.1,421.5 789.5,644.3 700.0,700.0 C610.5,755.7 251.2,702.7 163.0,700.0 C74.8,697.3 168.4,688.4 171.0,684.0 C173.6,679.6 175.9,677.9 178.3,673.8 C180.7,669.7 183.1,664.5 185.5,659.4 C187.9,654.3 188.7,646.9 192.6,643.3 C196.5,639.7 202.4,640.4 208.7,638.0 C215.0,635.6 224.2,632.3 230.2,629.0 C236.2,625.7 238.8,622.8 244.5,618.3 C250.2,613.8 259.7,606.4 264.2,602.2 C268.7,598.1 269.2,596.4 271.3,593.4 C273.4,590.4 275.5,586.4 276.7,584.3 C277.9,582.2 277.9,583.2 278.5,580.9 C279.1,578.5 280.9,573.8 280.3,570.2 C279.7,566.6 276.1,563.6 274.9,559.4 C273.7,555.2 273.0,549.8 273.0,545.0 C273.0,540.2 273.4,535.0 274.9,530.8 C276.4,526.6 279.3,524.2 282.0,520.0 C284.7,515.8 288.3,510.2 291.0,505.8 C293.7,501.4 295.0,497.5 298.0,493.5 C301.0,489.5 304.7,485.4 309.0,482.0 C313.3,478.6 318.3,476.2 324.0,473.0 C329.7,469.8 338.3,465.6 343.0,463.0 C347.7,460.4 349.9,459.4 352.0,457.3 C354.1,455.2 353.7,453.7 355.5,450.5 C357.3,447.3 360.6,442.5 362.7,438.0 C364.8,433.5 366.2,428.9 368.0,423.7 C369.8,418.5 372.2,409.6 373.4,406.7 C374.6,403.8 373.7,406.7 375.0,406.0Z M593.4,276.0 C593.7,274.3 595.9,271.8 598.0,270.0 C600.1,268.2 602.6,266.3 606.0,265.0 C609.4,263.7 616.7,261.5 618.5,262.0 C620.3,262.5 616.9,266.0 617.0,268.0 C617.1,270.0 619.3,271.8 619.0,274.0 C618.7,276.2 616.6,278.8 615.0,281.0 C613.4,283.2 611.3,286.7 609.5,287.0 C607.7,287.3 605.6,284.2 604.0,283.0 C602.4,281.8 601.3,280.0 600.0,279.5 C598.7,279.0 597.1,280.6 596.0,280.0 C594.9,279.4 593.1,277.7 593.4,276.0Z M640.4,265.2 L639.6,266.1 L637.8,266.5 L635.3,266.5 L632.7,265.9 L630.5,265.0 L629.0,263.9 L628.6,262.8 L629.4,261.9 L631.2,261.5 L633.7,261.5 L636.3,262.1 L638.5,263.0 L640.0,264.1Z M568.8,296.2 L569.2,297.4 L569.0,299.0 L568.0,300.5 L566.5,301.7 L564.9,302.4 L563.3,302.4 L562.2,301.8 L561.8,300.6 L562.0,299.0 L563.0,297.5 L564.5,296.3 L566.1,295.6 L567.7,295.6Z M568.7,307.6 L568.4,308.0 L567.8,308.1 L567.0,308.1 L566.3,307.8 L565.7,307.4 L565.3,306.9 L565.3,306.4 L565.6,306.0 L566.2,305.9 L567.0,305.9 L567.7,306.2 L568.3,306.6 L568.7,307.1Z" fill="#f3f0e6" stroke="#c9cdd6" stroke-width="0.6"/>
<path d="M93.8,498.4 L93.1,499.0 L91.5,499.2 L89.3,498.9 L86.9,498.3 L84.8,497.4 L83.5,496.4 L83.2,495.6 L83.9,495.0 L85.5,494.8 L87.7,495.1 L90.1,495.7 L92.2,496.6 L93.5,497.6Z M107.9,485.2 L108.0,485.7 L107.8,486.2 L107.3,486.7 L106.7,487.0 L106.0,487.2 L105.5,487.1 L105.1,486.8 L105.0,486.3 L105.2,485.8 L105.7,485.3 L106.3,485.0 L107.0,484.8 L107.5,484.9Z M103.8,503.2 L104.0,504.2 L104.1,504.9 L103.9,505.5 L103.6,505.6 L103.1,505.3 L102.6,504.6 L102.2,503.8 L102.0,502.8 L101.9,502.1 L102.1,501.5 L102.4,501.4 L102.9,501.7 L103.4,502.4Z M117.0,576.4 L116.9,576.7 L116.6,577.0 L116.2,577.2 L115.8,577.2 L115.4,577.0 L115.1,576.7 L115.0,576.4 L115.1,576.1 L115.4,575.8 L115.8,575.6 L116.2,575.6 L116.6,575.8 L116.9,576.1Z M451.0,396.0 L450.9,396.3 L450.8,396.5 L450.5,396.6 L450.3,396.6 L450.0,396.5 L449.9,396.3 L449.8,396.0 L449.9,395.7 L450.0,395.5 L450.3,395.4 L450.5,395.4 L450.8,395.5 L450.9,395.7Z M546.6,266.0 L546.5,266.3 L546.4,266.5 L546.1,266.6 L545.9,266.6 L545.6,266.5 L545.5,266.3 L545.4,266.0 L545.5,265.7 L545.6,265.5 L545.9,265.4 L546.1,265.4 L546.4,265.5 L546.5,265.7Z M69.4,619.0 L69.2,621.1 L68.5,622.8 L67.5,623.7 L66.5,623.7 L65.5,622.8 L64.8,621.1 L64.6,619.0 L64.8,616.9 L65.5,615.2 L66.5,614.3 L67.5,614.3 L68.5,615.2 L69.2,616.9Z M64.9,648.4 L64.3,649.0 L63.2,649.2 L62.1,649.0 L61.0,648.4 L60.2,647.5 L59.9,646.5 L60.1,645.6 L60.7,645.0 L61.8,644.8 L62.9,645.0 L64.0,645.6 L64.8,646.5 L65.1,647.5Z M85.4,636.0 L85.2,637.0 L84.5,637.9 L83.5,638.3 L82.5,638.3 L81.5,637.9 L80.8,637.0 L80.6,636.0 L80.8,635.0 L81.5,634.1 L82.5,633.7 L83.5,633.7 L84.5,634.1 L85.2,635.0Z M92.0,636.0 C92.5,637.3 95.2,639.5 97.0,639.0 C98.8,638.5 100.7,635.7 103.0,633.0 C105.3,630.3 110.0,625.0 111.0,623.0 C112.0,621.0 110.8,620.3 109.0,621.0 C107.2,621.7 102.5,625.3 100.0,627.0 C97.5,628.7 95.3,629.5 94.0,631.0 C92.7,632.5 91.5,634.7 92.0,636.0Z M131.8,639.5 L131.3,641.6 L130.0,643.3 L128.1,644.2 L125.9,644.2 L124.0,643.3 L122.7,641.6 L122.2,639.5 L122.7,637.4 L124.0,635.7 L125.9,634.8 L128.1,634.8 L130.0,635.7 L131.3,637.4Z M155.0,635.0 C154.8,636.2 158.0,635.3 160.0,634.0 C162.0,632.7 164.7,630.0 167.0,627.0 C169.3,624.0 172.5,619.0 174.0,616.0 C175.5,613.0 176.2,610.3 176.0,609.0 C175.8,607.7 174.3,606.3 173.0,608.0 C171.7,609.7 170.0,615.8 168.0,619.0 C166.0,622.2 163.2,624.3 161.0,627.0 C158.8,629.7 155.2,633.8 155.0,635.0Z M175.0,607.0 C175.2,608.2 177.5,607.3 179.0,606.0 C180.5,604.7 183.0,601.0 184.0,599.0 C185.0,597.0 185.3,595.0 185.0,594.0 C184.7,593.0 183.2,592.2 182.0,593.0 C180.8,593.8 179.2,596.7 178.0,599.0 C176.8,601.3 174.8,605.8 175.0,607.0Z" fill="#f3f0e6" opacity=".55"/>
<g clip-path="url(#landclip)">
<ellipse cx="330" cy="160" rx="40" ry="32" fill="#cfe3bd" opacity="0.7" filter="url(#bl)"/>
<ellipse cx="400" cy="150" rx="62" ry="15" fill="#cfe3bd" opacity="0.7" filter="url(#bl)"/>
<ellipse cx="470" cy="158" rx="42" ry="20" fill="#cfe3bd" opacity="0.7" filter="url(#bl)"/>
<ellipse cx="545" cy="172" rx="62" ry="13" fill="#cfe3bd" opacity="0.65" filter="url(#bl)"/>
<ellipse cx="600" cy="158" rx="52" ry="32" fill="#cfe3bd" opacity="0.55" filter="url(#bl)"/>
<ellipse cx="660" cy="138" rx="42" ry="22" fill="#cfe3bd" opacity="0.55" filter="url(#bl)"/>
<ellipse cx="520" cy="140" rx="42" ry="16" fill="#cfe3bd" opacity="0.6" filter="url(#bl)"/>
<ellipse cx="318" cy="225" rx="24" ry="42" fill="#cfe3bd" opacity="0.55" filter="url(#bl)"/>
<ellipse cx="322" cy="290" rx="18" ry="30" fill="#cfe3bd" opacity="0.35" filter="url(#bl)"/>
<ellipse cx="445" cy="225" rx="32" ry="9" fill="#cfe3bd" opacity="0.45" filter="url(#bl)"/>
<ellipse cx="500" cy="245" rx="24" ry="28" fill="#cfe3bd" opacity="0.5" filter="url(#bl)"/>
<ellipse cx="405" cy="250" rx="27" ry="9" fill="#cfe3bd" opacity="0.4" filter="url(#bl)"/>
<ellipse cx="470" cy="330" rx="32" ry="11" fill="#cfe3bd" opacity="0.35" filter="url(#bl)"/>
<ellipse cx="585" cy="205" rx="18" ry="14" fill="#cfe3bd" opacity="0.4" filter="url(#bl)"/>
<ellipse cx="380" cy="320" rx="40" ry="8" fill="#cfe3bd" opacity="0.3" filter="url(#bl)"/>
<ellipse cx="445" cy="365" rx="30" ry="8" fill="#cfe3bd" opacity="0.35" filter="url(#bl)"/>
<ellipse cx="400" cy="375" rx="18" ry="8" fill="#cfe3bd" opacity="0.3" filter="url(#bl)"/>
<ellipse cx="520" cy="200" rx="10" ry="25" fill="#cfe3bd" opacity="0.3" filter="url(#bl)"/>
<ellipse cx="420" cy="470" rx="36" ry="24" fill="#cfe3bd" opacity="0.4" filter="url(#bl)"/>
<ellipse cx="395" cy="440" rx="26" ry="26" fill="#cfe3bd" opacity="0.4" filter="url(#bl)"/>
<ellipse cx="520" cy="420" rx="62" ry="15" fill="#cfe3bd" opacity="0.4" filter="url(#bl)"/>
<ellipse cx="620" cy="385" rx="58" ry="13" fill="#cfe3bd" opacity="0.5" filter="url(#bl)"/>
<ellipse cx="660" cy="400" rx="32" ry="22" fill="#cfe3bd" opacity="0.4" filter="url(#bl)"/>
<ellipse cx="290" cy="555" rx="15" ry="24" fill="#cfe3bd" opacity="0.35" filter="url(#bl)"/>
<ellipse cx="350" cy="520" rx="32" ry="15" fill="#cfe3bd" opacity="0.3" filter="url(#bl)"/>
<ellipse cx="335" cy="490" rx="25" ry="12" fill="#cfe3bd" opacity="0.25" filter="url(#bl)"/>
<path d="M566.0,512.0 L606.0,512.0 L606.0,560.0 L590.0,572.0 L566.0,560.0Z" fill="#f8ebbf" opacity=".5" filter="url(#bl2)"/>
<path d="M470.0,541.0 L520.0,560.0 L578.0,545.0 L578.0,600.0 L520.0,605.0 L485.0,600.0Z" fill="#f8ebbf" opacity=".5" filter="url(#bl2)"/>
<path d="M637.0,600.0 L687.0,561.0 L687.0,640.0 L650.0,640.0 L640.0,622.0Z" fill="#f8ebbf" opacity=".5" filter="url(#bl2)"/>
<path d="M400.0,684.0 L440.0,640.0 L520.0,600.0 L540.0,620.0 L510.0,684.0Z" fill="#f8ebbf" opacity=".5" filter="url(#bl2)"/>
<path d="M370.0,684.0 L400.0,650.0 L450.0,610.0 L470.0,625.0 L440.0,684.0Z" fill="#f8ebbf" opacity=".5" filter="url(#bl2)"/>
<path d="M455.0,684.0 L460.0,640.0 L500.0,640.0 L510.0,684.0Z" fill="#f8ebbf" opacity=".5" filter="url(#bl2)"/>
</g>
<path d="M299.9,192.5 C302.1,191.8 310.1,188.6 312.9,188.6 C315.7,188.6 315.9,190.8 316.8,192.5 C317.7,194.2 316.1,197.7 318.0,199.0 C319.9,200.3 324.3,200.5 328.4,200.3 C332.5,200.1 338.6,198.6 342.7,197.7 C346.8,196.8 350.1,195.1 353.1,195.1 C356.1,195.1 359.2,196.0 360.9,197.7 C362.6,199.4 362.4,203.6 363.5,205.5 C364.6,207.4 368.3,206.7 367.4,209.0 C366.5,211.3 361.1,216.4 358.3,219.5 C355.5,222.6 351.6,222.3 350.5,227.3 C349.4,232.3 352.4,244.4 351.8,249.4 C351.2,254.4 346.8,254.5 346.6,257.1 C346.4,259.7 350.5,262.1 350.5,264.9 C350.5,267.7 349.2,272.4 346.6,274.0 C344.0,275.6 336.0,273.0 334.9,274.7 C333.8,276.4 338.3,281.3 340.1,284.4 C341.9,287.5 345.8,289.7 345.9,293.3 C346.0,296.9 341.1,301.9 340.5,305.8 C339.9,309.7 341.1,313.5 342.3,316.5 C343.5,319.5 348.3,321.0 347.7,323.7 C347.1,326.4 340.8,329.6 338.7,332.6 C336.6,335.6 335.4,337.5 335.1,341.6 C334.8,345.7 336.6,354.4 336.9,357.0" fill="none" stroke="#bfa8c6" stroke-width="1.4" stroke-linejoin="round" opacity=".9"/>
<path d="M487.0,142.9 C488.1,144.4 490.2,148.8 493.3,151.8 C496.4,154.8 500.7,158.1 505.8,160.8 C510.9,163.5 517.7,166.4 523.7,167.9 C529.7,169.4 537.4,170.0 541.6,169.7 C545.8,169.4 545.1,165.8 548.7,166.1 C552.3,166.4 559.4,169.7 563.0,171.5 C566.6,173.3 566.6,175.7 570.2,176.9 C573.8,178.1 579.7,178.4 584.5,178.7 C589.3,179.0 593.9,178.4 598.8,178.7 C603.7,179.0 611.5,180.2 614.0,180.5" fill="none" stroke="#bfa8c6" stroke-width="1.4" stroke-linejoin="round" opacity=".9"/>
<path d="M455.0,419.0 C455.8,420.8 457.8,425.7 460.0,430.0 C462.2,434.3 467.0,440.0 468.0,445.0 C469.0,450.0 464.8,455.8 466.0,460.0 C467.2,464.2 471.6,466.7 475.0,470.0 C478.4,473.3 483.9,476.3 486.7,480.0 C489.5,483.7 489.6,487.9 492.0,492.0 C494.4,496.1 500.2,500.6 501.0,504.4 C501.8,508.1 502.1,512.9 496.9,514.5 C491.7,516.1 477.1,513.8 470.0,514.0 C462.9,514.2 457.0,514.0 454.0,515.8 C451.0,517.6 455.3,522.0 452.0,524.7 C448.7,527.4 437.2,527.4 434.3,531.9 C431.4,536.4 436.4,546.5 434.3,551.6 C432.2,556.7 426.2,559.3 421.7,562.3 C417.2,565.3 412.2,565.8 407.4,569.4 C402.6,573.0 396.9,579.9 393.0,583.8 C389.1,587.7 389.3,591.6 384.0,593.0 C378.7,594.4 367.8,592.2 361.0,592.4 C354.2,592.6 349.6,592.0 343.0,594.2 C336.4,596.4 327.9,601.8 321.6,605.8 C315.4,609.8 308.3,610.9 305.5,618.3 C302.7,625.7 304.8,638.0 304.6,650.0 C304.5,662.0 304.6,683.3 304.6,690.0" fill="none" stroke="#bfa8c6" stroke-width="1.6" stroke-linejoin="round" opacity=".9"/>
<path d="M304.6,659.4 L343.0,686.0" fill="none" stroke="#bfa8c6" stroke-width="1.4" stroke-linejoin="round" opacity=".9"/>
<path d="M303.7,666.6 C298.6,668.1 281.9,674.9 273.0,675.5 C264.1,676.1 256.2,670.6 250.0,670.0 C243.8,669.4 239.7,669.7 236.0,672.0 C232.3,674.3 229.3,682.0 228.0,684.0" fill="none" stroke="#bfa8c6" stroke-width="1" stroke-linejoin="round" opacity=".9"/>
<path d="M348.0,139.0 C348.7,140.8 352.3,145.7 352.0,150.0 C351.7,154.3 346.0,160.0 346.0,165.0 C346.0,170.0 352.2,174.8 352.0,180.0 C351.8,185.2 346.2,193.3 345.0,196.0" fill="none" stroke="#d3c4d6" stroke-width="0.9" opacity=".85"/>
<path d="M352.0,150.0 C355.8,150.5 367.0,153.0 375.0,153.0 C383.0,153.0 392.5,149.5 400.0,150.0 C407.5,150.5 413.3,156.0 420.0,156.0 C426.7,156.0 436.7,151.0 440.0,150.0" fill="none" stroke="#d3c4d6" stroke-width="0.9" opacity=".85"/>
<path d="M440.0,150.0 C442.0,151.7 447.0,158.3 452.0,160.0 C457.0,161.7 465.7,158.3 470.0,160.0 C474.3,161.7 474.3,169.2 478.0,170.0 C481.7,170.8 489.7,165.8 492.0,165.0" fill="none" stroke="#d3c4d6" stroke-width="0.9" opacity=".85"/>
<path d="M452.0,160.0 C452.5,162.5 452.0,170.8 455.0,175.0 C458.0,179.2 465.0,181.7 470.0,185.0 C475.0,188.3 483.3,190.8 485.0,195.0 C486.7,199.2 479.2,205.0 480.0,210.0 C480.8,215.0 488.3,222.5 490.0,225.0" fill="none" stroke="#d3c4d6" stroke-width="0.9" opacity=".85"/>
<path d="M490.0,225.0 C488.3,226.7 479.7,230.8 480.0,235.0 C480.3,239.2 491.2,245.5 492.0,250.0 C492.8,254.5 483.7,258.3 485.0,262.0 C486.3,265.7 497.8,268.2 500.0,272.0 C502.2,275.8 498.3,282.8 498.0,285.0" fill="none" stroke="#d3c4d6" stroke-width="0.9" opacity=".85"/>
<path d="M535.0,185.0 C535.8,187.5 540.5,195.0 540.0,200.0 C539.5,205.0 532.0,210.0 532.0,215.0 C532.0,220.0 537.8,225.8 540.0,230.0 C542.2,234.2 544.2,238.3 545.0,240.0" fill="none" stroke="#d3c4d6" stroke-width="0.9" opacity=".85"/>
<path d="M363.0,205.0 C365.8,212.5 373.8,242.2 380.0,250.0 C386.2,257.8 393.3,252.7 400.0,252.0 C406.7,251.3 413.3,249.3 420.0,246.0 C426.7,242.7 433.3,235.0 440.0,232.0 C446.7,229.0 453.3,227.5 460.0,228.0 C466.7,228.5 476.7,233.8 480.0,235.0" fill="none" stroke="#d3c4d6" stroke-width="0.9" opacity=".85"/>
<path d="M400.0,252.0 C399.2,253.7 393.3,259.3 395.0,262.0 C396.7,264.7 402.5,268.0 410.0,268.0 C417.5,268.0 432.5,264.2 440.0,262.0 C447.5,259.8 455.0,260.0 455.0,255.0 C455.0,250.0 442.5,235.8 440.0,232.0" fill="none" stroke="#d3c4d6" stroke-width="0.9" opacity=".85"/>
<path d="M346.0,274.0 C350.0,273.3 361.8,272.0 370.0,270.0 C378.2,268.0 390.8,263.3 395.0,262.0" fill="none" stroke="#d3c4d6" stroke-width="0.9" opacity=".85"/>
<path d="M345.0,293.0 C349.2,294.2 360.8,300.2 370.0,300.0 C379.2,299.8 390.0,292.0 400.0,292.0 C410.0,292.0 418.3,300.3 430.0,300.0 C441.7,299.7 458.7,292.5 470.0,290.0 C481.3,287.5 493.3,285.8 498.0,285.0" fill="none" stroke="#d3c4d6" stroke-width="0.9" opacity=".85"/>
<path d="M498.0,285.0 C499.2,287.5 505.5,295.0 505.0,300.0 C504.5,305.0 495.8,310.8 495.0,315.0 C494.2,319.2 499.2,323.3 500.0,325.0" fill="none" stroke="#d3c4d6" stroke-width="0.9" opacity=".85"/>
<path d="M336.0,340.0 C338.3,338.3 345.2,333.7 350.0,330.0 C354.8,326.3 360.0,319.3 365.0,318.0 C370.0,316.7 374.2,323.3 380.0,322.0 C385.8,320.7 393.3,311.7 400.0,310.0 C406.7,308.3 413.3,312.8 420.0,312.0 C426.7,311.2 431.7,305.0 440.0,305.0 C448.3,305.0 463.3,307.8 470.0,312.0 C476.7,316.2 475.8,326.2 480.0,330.0 C484.2,333.8 493.8,332.0 495.0,335.0 C496.2,338.0 488.3,345.8 487.0,348.0" fill="none" stroke="#d3c4d6" stroke-width="0.9" opacity=".85"/>
<path d="M530.0,378.0 C530.5,385.0 534.7,404.7 533.0,420.0 C531.3,435.3 522.2,453.3 520.0,470.0 C517.8,486.7 514.2,508.3 520.0,520.0 C525.8,531.7 547.5,541.7 555.0,540.0 C562.5,538.3 563.2,520.0 565.0,510.0 C566.8,500.0 566.8,489.2 566.0,480.0 C565.2,470.8 561.0,459.2 560.0,455.0" fill="none" stroke="#d3c4d6" stroke-width="0.9" opacity=".85"/>
<path d="M555.0,540.0 C558.8,543.3 574.2,543.3 578.0,560.0 C581.8,576.7 579.0,619.3 578.0,640.0 C577.0,660.7 573.0,676.7 572.0,684.0" fill="none" stroke="#d3c4d6" stroke-width="0.9" opacity=".85"/>
<path d="M566.0,512.0 C571.7,510.0 587.7,501.2 600.0,500.0 C612.3,498.8 631.7,508.3 640.0,505.0 C648.3,501.7 650.0,489.2 650.0,480.0 C650.0,470.8 641.7,455.0 640.0,450.0" fill="none" stroke="#d3c4d6" stroke-width="0.9" opacity=".85"/>
<path d="M640.0,505.0 C637.5,514.2 630.0,544.2 625.0,560.0 C620.0,575.8 617.8,590.0 610.0,600.0 C602.2,610.0 583.3,616.7 578.0,620.0" fill="none" stroke="#d3c4d6" stroke-width="0.9" opacity=".85"/>
<path d="M610.0,600.0 C613.3,604.2 617.2,627.5 630.0,625.0 C642.8,622.5 677.5,591.7 687.0,585.0" fill="none" stroke="#d3c4d6" stroke-width="0.9" opacity=".85"/>
<path d="M676.0,600.0 C676.0,608.3 678.7,636.0 676.0,650.0 C673.3,664.0 662.7,678.3 660.0,684.0" fill="none" stroke="#d3c4d6" stroke-width="0.9" opacity=".85"/>
<path d="M440.0,528.0 C445.0,527.5 460.0,523.0 470.0,525.0 C480.0,527.0 488.8,536.7 500.0,540.0 C511.2,543.3 527.8,545.0 537.0,545.0 C546.2,545.0 552.0,540.8 555.0,540.0" fill="none" stroke="#d3c4d6" stroke-width="0.9" opacity=".85"/>
<path d="M537.0,545.0 C532.5,550.8 515.3,570.8 510.0,580.0 C504.7,589.2 508.3,595.3 505.0,600.0 C501.7,604.7 495.8,606.0 490.0,608.0 C484.2,610.0 475.8,606.7 470.0,612.0 C464.2,617.3 459.2,628.0 455.0,640.0 C450.8,652.0 446.7,676.7 445.0,684.0" fill="none" stroke="#d3c4d6" stroke-width="0.9" opacity=".85"/>
<path d="M370.0,420.0 C371.3,423.3 377.7,433.3 378.0,440.0 C378.3,446.7 371.7,454.2 372.0,460.0 C372.3,465.8 380.3,470.0 380.0,475.0 C379.7,480.0 370.3,485.0 370.0,490.0 C369.7,495.0 376.7,502.5 378.0,505.0" fill="none" stroke="#d3c4d6" stroke-width="0.9" opacity=".85"/>
<path d="M378.0,505.0 C375.0,506.7 364.7,510.8 360.0,515.0 C355.3,519.2 355.0,528.3 350.0,530.0 C345.0,531.7 335.8,528.3 330.0,525.0 C324.2,521.7 320.0,511.7 315.0,510.0 C310.0,508.3 302.5,514.2 300.0,515.0" fill="none" stroke="#d3c4d6" stroke-width="0.9" opacity=".85"/>
<path d="M350.0,530.0 C349.2,535.0 343.3,552.5 345.0,560.0 C346.7,567.5 356.7,569.7 360.0,575.0 C363.3,580.3 364.2,589.2 365.0,592.0" fill="none" stroke="#d3c4d6" stroke-width="0.9" opacity=".85"/>
<path d="M396.0,440.0 C400.0,441.7 413.5,450.0 420.0,450.0 C426.5,450.0 432.8,436.7 435.0,440.0 C437.2,443.3 431.3,463.3 433.0,470.0 C434.7,476.7 443.0,478.3 445.0,480.0" fill="none" stroke="#d3c4d6" stroke-width="0.9" opacity=".85"/>
<path d="M445.0,480.0 C442.5,483.3 429.2,494.2 430.0,500.0 C430.8,505.8 446.7,512.5 450.0,515.0" fill="none" stroke="#d3c4d6" stroke-width="0.9" opacity=".85"/>
<path d="M505.0,395.0 C505.8,399.2 505.8,414.2 510.0,420.0 C514.2,425.8 521.7,429.2 530.0,430.0 C538.3,430.8 550.0,423.3 560.0,425.0 C570.0,426.7 580.0,439.2 590.0,440.0 C600.0,440.8 611.7,428.3 620.0,430.0 C628.3,431.7 633.3,448.3 640.0,450.0 C646.7,451.7 652.2,440.0 660.0,440.0 C667.8,440.0 682.5,448.3 687.0,450.0" fill="none" stroke="#d3c4d6" stroke-width="0.9" opacity=".85"/>
<path d="M560.0,425.0 L560.0,455.0" fill="none" stroke="#d3c4d6" stroke-width="0.9" opacity=".85"/>
<path d="M280.0,596.0 C281.7,596.7 287.3,597.3 290.0,600.0 C292.7,602.7 293.5,609.0 296.0,612.0 C298.5,615.0 303.5,617.0 305.0,618.0" fill="none" stroke="#d3c4d6" stroke-width="0.9" opacity=".85"/>
<path d="M250.0,640.0 C253.3,640.8 263.3,641.7 270.0,645.0 C276.7,648.3 284.3,657.2 290.0,660.0 C295.7,662.8 301.7,661.7 304.0,662.0" fill="none" stroke="#d3c4d6" stroke-width="0.9" opacity=".85"/>
<g>
<text x="361.0" y="141.8" font-size="12.0" fill="#4a4a4a" font-family="'Liberation Sans','DejaVu Sans',sans-serif" textLength="33.2" lengthAdjust="spacingAndGlyphs" stroke="#fff" stroke-opacity=".75" stroke-width="2" paint-order="stroke" stroke-linejoin="round" opacity="1">Uviéu</text>
<text x="417.5" y="160.0" font-size="12.0" fill="#4a4a4a" font-family="'Liberation Sans','DejaVu Sans',sans-serif" textLength="84.7" lengthAdjust="spacingAndGlyphs" stroke="#fff" stroke-opacity=".75" stroke-width="2" paint-order="stroke" stroke-linejoin="round" opacity="1">Vitoria-Gasteiz</text>
<text x="410.3" y="203.2" font-size="11.0" fill="#8a7296" font-family="'Liberation Sans','DejaVu Sans',sans-serif" font-style="italic" textLength="30.4" lengthAdjust="spacingAndGlyphs" stroke="#fff" stroke-opacity=".75" stroke-width="2" paint-order="stroke" stroke-linejoin="round" opacity="1">Castilla</text>
<text x="406.7" y="216.7" font-size="11.0" fill="#8a7296" font-family="'Liberation Sans','DejaVu Sans',sans-serif" font-style="italic" textLength="32.2" lengthAdjust="spacingAndGlyphs" stroke="#fff" stroke-opacity=".75" stroke-width="2" paint-order="stroke" stroke-linejoin="round" opacity="1">y León</text>
<text x="489.7" y="219.8" font-size="11.0" fill="#8a7296" font-family="'Liberation Sans','DejaVu Sans',sans-serif" font-style="italic" textLength="36.4" lengthAdjust="spacingAndGlyphs" stroke="#fff" stroke-opacity=".75" stroke-width="2" paint-order="stroke" stroke-linejoin="round" opacity="1">Aragón</text>
<text x="562.1" y="138.8" font-size="11.0" fill="#8a7296" font-family="'Liberation Sans','DejaVu Sans',sans-serif" font-style="italic" textLength="45.6" lengthAdjust="spacingAndGlyphs" stroke="#fff" stroke-opacity=".75" stroke-width="2" paint-order="stroke" stroke-linejoin="round" opacity="1">Occitanie</text>
<text x="642.6" y="162.4" font-size="12.0" fill="#4a4a4a" font-family="'Liberation Sans','DejaVu Sans',sans-serif" textLength="52.9" lengthAdjust="spacingAndGlyphs" stroke="#fff" stroke-opacity=".75" stroke-width="2" paint-order="stroke" stroke-linejoin="round" opacity="1">Marseille</text>
<text x="544.8" y="193.5" font-size="12.5" fill="#4a4a4a" font-family="'Liberation Sans','DejaVu Sans',sans-serif" textLength="47.7" lengthAdjust="spacingAndGlyphs" stroke="#fff" stroke-opacity=".75" stroke-width="2" paint-order="stroke" stroke-linejoin="round" opacity="1">Andorra</text>
<text x="548.7" y="209.1" font-size="12.5" fill="#4a4a4a" font-family="'Liberation Sans','DejaVu Sans',sans-serif" textLength="43.8" lengthAdjust="spacingAndGlyphs" stroke="#fff" stroke-opacity=".75" stroke-width="2" paint-order="stroke" stroke-linejoin="round" opacity="1">la Vella</text>
<text x="413.1" y="240.9" font-size="12.0" fill="#4a4a4a" font-family="'Liberation Sans','DejaVu Sans',sans-serif" textLength="40.3" lengthAdjust="spacingAndGlyphs" stroke="#fff" stroke-opacity=".75" stroke-width="2" paint-order="stroke" stroke-linejoin="round" opacity="1">Madrid</text>
<text x="420.9" y="271.4" font-size="13.5" fill="#7f6e89" font-family="'Liberation Sans','DejaVu Sans',sans-serif" textLength="47.4" lengthAdjust="spacingAndGlyphs" stroke="#fff" stroke-opacity=".75" stroke-width="2" paint-order="stroke" stroke-linejoin="round" opacity="1">España</text>
<text x="495.8" y="276.1" font-size="12.0" fill="#4a4a4a" font-family="'Liberation Sans','DejaVu Sans',sans-serif" textLength="47.7" lengthAdjust="spacingAndGlyphs" stroke="#fff" stroke-opacity=".75" stroke-width="2" paint-order="stroke" stroke-linejoin="round" opacity="1">València</text>
<text x="580.0" y="273.2" font-size="12.0" fill="#4a4a4a" font-family="'Liberation Sans','DejaVu Sans',sans-serif" textLength="34.9" lengthAdjust="spacingAndGlyphs" stroke="#fff" stroke-opacity=".75" stroke-width="2" paint-order="stroke" stroke-linejoin="round" opacity="1">Palma</text>
<text x="278.8" y="287.4" font-size="13.5" fill="#7f6e89" font-family="'Liberation Sans','DejaVu Sans',sans-serif" textLength="58.1" lengthAdjust="spacingAndGlyphs" stroke="#fff" stroke-opacity=".75" stroke-width="2" paint-order="stroke" stroke-linejoin="round" opacity="1">Portugal</text>
<text x="274.0" y="323.0" font-size="12.0" fill="#4a4a4a" font-family="'Liberation Sans','DejaVu Sans',sans-serif" textLength="37.0" lengthAdjust="spacingAndGlyphs" stroke="#fff" stroke-opacity=".75" stroke-width="2" paint-order="stroke" stroke-linejoin="round" opacity="1">Lisboa</text>
<circle cx="292.2" cy="305.8" r="2.2" fill="#ddd" stroke="#666" stroke-width="1"/><circle cx="292.2" cy="305.8" r="0.8" fill="#666"/>
<text x="333.3" y="354.8" font-size="12.0" fill="#4a4a4a" font-family="'Liberation Sans','DejaVu Sans',sans-serif" textLength="35.7" lengthAdjust="spacingAndGlyphs" stroke="#fff" stroke-opacity=".75" stroke-width="2" paint-order="stroke" stroke-linejoin="round" opacity="1">Sevilla</text>
<text x="387.4" y="354.5" font-size="11.0" fill="#8a7296" font-family="'Liberation Sans','DejaVu Sans',sans-serif" font-style="italic" textLength="48.8" lengthAdjust="spacingAndGlyphs" stroke="#fff" stroke-opacity=".75" stroke-width="2" paint-order="stroke" stroke-linejoin="round" opacity="1">Andalucía</text>
<text x="421.9" y="376.6" font-size="12.0" fill="#4a4a4a" font-family="'Liberation Sans','DejaVu Sans',sans-serif" textLength="42.9" lengthAdjust="spacingAndGlyphs" stroke="#fff" stroke-opacity=".75" stroke-width="2" paint-order="stroke" stroke-linejoin="round" opacity="1">Málaga</text>
<text x="364.5" y="406.5" font-size="12.0" fill="#4a4a4a" font-family="'Liberation Sans','DejaVu Sans',sans-serif" textLength="51.0" lengthAdjust="spacingAndGlyphs" stroke="#fff" stroke-opacity=".75" stroke-width="2" paint-order="stroke" stroke-linejoin="round" opacity="1">Gibraltar</text>
<circle cx="570.3" cy="175.5" r="2.2" fill="#ddd" stroke="#666" stroke-width="1"/><circle cx="570.3" cy="175.5" r="0.8" fill="#666"/>
<circle cx="667.8" cy="148.8" r="1.9" fill="#ddd" stroke="#888" stroke-width="1"/><circle cx="667.8" cy="148.8" r="0.8" fill="#888"/>
<text x="318.0" y="434.8" font-size="12.0" fill="#4a4a4a" font-family="'Liberation Sans','DejaVu Sans',sans-serif" textLength="68.9" lengthAdjust="spacingAndGlyphs" stroke="#fff" stroke-opacity=".75" stroke-width="2" paint-order="stroke" stroke-linejoin="round" opacity="1">Rabat <tspan font-family="DejaVu Sans">ⵔⴱⴰⵟ</tspan></text>
<text x="338.6" y="451.0" font-size="11.5" fill="#4a4a4a" font-family="'DejaVu Sans',sans-serif" textLength="27.7" lengthAdjust="spacingAndGlyphs" stroke="#fff" stroke-opacity=".75" stroke-width="2" paint-order="stroke" stroke-linejoin="round" opacity="1">الرباط</text>
<circle cx="352.0" cy="457.3" r="2.2" fill="#ddd" stroke="#666" stroke-width="1"/><circle cx="352.0" cy="457.3" r="0.8" fill="#666"/>
<text x="474.5" y="384.5" font-size="12.0" fill="#4a4a4a" font-family="'Liberation Sans','DejaVu Sans',sans-serif" textLength="76.2" lengthAdjust="spacingAndGlyphs" stroke="#fff" stroke-opacity=".75" stroke-width="2" paint-order="stroke" stroke-linejoin="round" opacity="1">Oran <tspan font-family="DejaVu Sans">ⵡⴰⵀⵔⴻⵏ</tspan></text>
<text x="497.9" y="400.5" font-size="11.5" fill="#4a4a4a" font-family="'DejaVu Sans',sans-serif" textLength="29.4" lengthAdjust="spacingAndGlyphs" stroke="#fff" stroke-opacity=".75" stroke-width="2" paint-order="stroke" stroke-linejoin="round" opacity="1">وهران</text>
<text x="568.4" y="386.1" font-size="12.0" fill="#4a4a4a" font-family="'Liberation Sans','DejaVu Sans',sans-serif" textLength="79.8" lengthAdjust="spacingAndGlyphs" stroke="#fff" stroke-opacity=".75" stroke-width="2" paint-order="stroke" stroke-linejoin="round" opacity="1">Alger <tspan font-family="DejaVu Sans">ⴷⵣⴰⵢⴻⵔ</tspan></text>
<text x="593.3" y="401.5" font-size="11.5" fill="#4a4a4a" font-family="'DejaVu Sans',sans-serif" textLength="29.5" lengthAdjust="spacingAndGlyphs" stroke="#fff" stroke-opacity=".75" stroke-width="2" paint-order="stroke" stroke-linejoin="round" opacity="1">الجزائر</text>
<circle cx="608.6" cy="370.0" r="2.2" fill="#ddd" stroke="#666" stroke-width="1"/><circle cx="608.6" cy="370.0" r="0.8" fill="#666"/>
<text x="665.1" y="347.2" font-size="12.0" fill="#4a4a4a" font-family="'Liberation Sans','DejaVu Sans',sans-serif" textLength="64.9" lengthAdjust="spacingAndGlyphs" stroke="#fff" stroke-opacity=".75" stroke-width="2" paint-order="stroke" stroke-linejoin="round" opacity="1">Constantine</text>
<text x="676.0" y="362.9" font-size="12.0" fill="#4a4a4a" font-family="'Liberation Sans','DejaVu Sans',sans-serif" textLength="64.0" lengthAdjust="spacingAndGlyphs" stroke="#fff" stroke-opacity=".75" stroke-width="2" paint-order="stroke" stroke-linejoin="round" opacity="1"><tspan font-family="DejaVu Sans">ⵇⵙⴻⵏⵟⵉⵏⴰ</tspan></text>
<text x="675.0" y="377.7" font-size="11.5" fill="#4a4a4a" font-family="'DejaVu Sans',sans-serif" textLength="41.0" lengthAdjust="spacingAndGlyphs" stroke="#fff" stroke-opacity=".75" stroke-width="2" paint-order="stroke" stroke-linejoin="round" opacity="1">قسنطينة</text>
<text x="647.1" y="423.0" font-size="12.0" fill="#4a4a4a" font-family="'Liberation Sans','DejaVu Sans',sans-serif" textLength="74.9" lengthAdjust="spacingAndGlyphs" stroke="#fff" stroke-opacity=".75" stroke-width="2" paint-order="stroke" stroke-linejoin="round" opacity="1">Batna <tspan font-family="DejaVu Sans">ⴱⴰⵜⵏⴰ</tspan></text>
<text x="677.0" y="437.6" font-size="11.5" fill="#4a4a4a" font-family="'DejaVu Sans',sans-serif" textLength="28.0" lengthAdjust="spacingAndGlyphs" stroke="#fff" stroke-opacity=".75" stroke-width="2" paint-order="stroke" stroke-linejoin="round" opacity="1">باتنة</text>
<text x="534.4" y="434.8" font-size="12.0" fill="#4a4a4a" font-family="'Liberation Sans','DejaVu Sans',sans-serif" textLength="74.2" lengthAdjust="spacingAndGlyphs" stroke="#fff" stroke-opacity=".75" stroke-width="2" paint-order="stroke" stroke-linejoin="round" opacity="1">Djelfa <tspan font-family="DejaVu Sans">ⵊⴻⵍⴼⴰ</tspan></text>
<text x="578.1" y="450.3" font-size="11.5" fill="#4a4a4a" font-family="'DejaVu Sans',sans-serif" textLength="30.5" lengthAdjust="spacingAndGlyphs" stroke="#fff" stroke-opacity=".75" stroke-width="2" paint-order="stroke" stroke-linejoin="round" opacity="1">الجلفة</text>
<circle cx="613.2" cy="436" r="1.6" fill="#eee" stroke="#888" stroke-width=".8"/>
<text x="447.1" y="461.3" font-size="11.0" fill="#8a7296" font-family="'Liberation Sans','DejaVu Sans',sans-serif" font-style="italic" textLength="40.6" lengthAdjust="spacingAndGlyphs" stroke="#fff" stroke-opacity=".75" stroke-width="2" paint-order="stroke" stroke-linejoin="round" opacity="1">Oriental</text>
<text x="445.1" y="474.3" font-size="10.5" fill="#8a7296" font-family="'DejaVu Sans',sans-serif" textLength="45.7" lengthAdjust="spacingAndGlyphs" stroke="#fff" stroke-opacity=".75" stroke-width="2" paint-order="stroke" stroke-linejoin="round" opacity="1">ⵜⴰⵏⴳⵎⵓⴹⵜ</text>
<text x="450.2" y="487.5" font-size="10.5" fill="#8a7296" font-family="'DejaVu Sans',sans-serif" textLength="33.5" lengthAdjust="spacingAndGlyphs" stroke="#fff" stroke-opacity=".75" stroke-width="2" paint-order="stroke" stroke-linejoin="round" opacity="1">الشرقية</text>
<text x="533.4" y="506.0" font-size="11.0" fill="#8a7296" font-family="'Liberation Sans','DejaVu Sans',sans-serif" font-style="italic" textLength="49.8" lengthAdjust="spacingAndGlyphs" stroke="#fff" stroke-opacity=".75" stroke-width="2" paint-order="stroke" stroke-linejoin="round" opacity="1">El Bayadh</text>
<text x="255.2" y="519.9" font-size="12.0" fill="#4a4a4a" font-family="'Liberation Sans','DejaVu Sans',sans-serif" textLength="62.6" lengthAdjust="spacingAndGlyphs" stroke="#fff" stroke-opacity=".75" stroke-width="2" paint-order="stroke" stroke-linejoin="round" opacity="1">Marrakech</text>
<text x="268.6" y="534.9" font-size="11.5" fill="#4a4a4a" font-family="'DejaVu Sans',sans-serif" textLength="49.2" lengthAdjust="spacingAndGlyphs" stroke="#fff" stroke-opacity=".75" stroke-width="2" paint-order="stroke" stroke-linejoin="round" opacity="1">ⵎⵕⵕⴰⴽⵛ</text>
<circle cx="322.3" cy="531.2" r="1.6" fill="#eee" stroke="#888" stroke-width=".8"/>
<text x="283.0" y="551.9" font-size="11.5" fill="#4a4a4a" font-family="'DejaVu Sans',sans-serif" textLength="34.0" lengthAdjust="spacingAndGlyphs" stroke="#fff" stroke-opacity=".75" stroke-width="2" paint-order="stroke" stroke-linejoin="round" opacity="1">مراكش</text>
<text x="352.0" y="532.7" font-size="11.0" fill="#8a7296" font-family="'Liberation Sans','DejaVu Sans',sans-serif" font-style="italic" textLength="67.0" lengthAdjust="spacingAndGlyphs" stroke="#fff" stroke-opacity=".75" stroke-width="2" paint-order="stroke" stroke-linejoin="round" opacity="1">Drâa-Tafilalet</text>
<text x="341.2" y="546.4" font-size="10.5" fill="#8a7296" font-family="'DejaVu Sans',sans-serif" textLength="89.5" lengthAdjust="spacingAndGlyphs" stroke="#fff" stroke-opacity=".75" stroke-width="2" paint-order="stroke" stroke-linejoin="round" opacity="1">ⴷⴰⵔⵄⴰ-ⵜⴰⴼⵉⵍⴰⵍⵜ</text>
<text x="354.7" y="559.8" font-size="10.5" fill="#8a7296" font-family="'DejaVu Sans',sans-serif" textLength="61.7" lengthAdjust="spacingAndGlyphs" stroke="#fff" stroke-opacity=".75" stroke-width="2" paint-order="stroke" stroke-linejoin="round" opacity="1">درعة تافيلالت</text>
<text x="217.1" y="616.4" font-size="13.5" fill="#7f6e89" font-family="'Liberation Sans','DejaVu Sans',sans-serif" textLength="102.5" lengthAdjust="spacingAndGlyphs" stroke="#fff" stroke-opacity=".75" stroke-width="2" paint-order="stroke" stroke-linejoin="round" opacity="1">Maroc <tspan font-family="DejaVu Sans">ⵍⵎⵖⵔⵉⴱ</tspan></text>
<text x="246.3" y="633.5" font-size="12.5" fill="#7f6e89" font-family="'DejaVu Sans',sans-serif" textLength="43.8" lengthAdjust="spacingAndGlyphs" stroke="#fff" stroke-opacity=".75" stroke-width="2" paint-order="stroke" stroke-linejoin="round" opacity="1">المغرب</text>
<text x="206.0" y="659.0" font-size="11.0" fill="#8a7296" font-family="'Liberation Sans','DejaVu Sans',sans-serif" font-style="italic" textLength="51.9" lengthAdjust="spacingAndGlyphs" stroke="#fff" stroke-opacity=".75" stroke-width="2" paint-order="stroke" stroke-linejoin="round" opacity="1">Laâyoune-</text>
<text x="212.3" y="672.4" font-size="11.0" fill="#8a7296" font-family="'Liberation Sans','DejaVu Sans',sans-serif" font-style="italic" textLength="41.1" lengthAdjust="spacingAndGlyphs" stroke="#fff" stroke-opacity=".75" stroke-width="2" paint-order="stroke" stroke-linejoin="round" opacity="1">Sakia El</text>
<text x="198.0" y="686.5" font-size="11.0" fill="#8a7296" font-family="'Liberation Sans','DejaVu Sans',sans-serif" font-style="italic" textLength="68.0" lengthAdjust="spacingAndGlyphs" stroke="#fff" stroke-opacity=".75" stroke-width="2" paint-order="stroke" stroke-linejoin="round" opacity="1">Hamra <tspan font-family="DejaVu Sans" font-style="normal">ⵍⵄⵢⵓⵏ</tspan></text>
<text x="348.4" y="656.3" font-size="11.0" fill="#8a7296" font-family="'Liberation Sans','DejaVu Sans',sans-serif" font-style="italic" textLength="38.5" lengthAdjust="spacingAndGlyphs" stroke="#fff" stroke-opacity=".75" stroke-width="2" paint-order="stroke" stroke-linejoin="round" opacity="1">Tindouf</text>
<text x="433.4" y="610.5" font-size="11.0" fill="#8a7296" font-family="'Liberation Sans','DejaVu Sans',sans-serif" font-style="italic" textLength="54.3" lengthAdjust="spacingAndGlyphs" stroke="#fff" stroke-opacity=".75" stroke-width="2" paint-order="stroke" stroke-linejoin="round" opacity="1">Béni Abbès</text>
<text x="523.7" y="582.9" font-size="11.0" fill="#8a7296" font-family="'Liberation Sans','DejaVu Sans',sans-serif" font-style="italic" textLength="56.0" lengthAdjust="spacingAndGlyphs" stroke="#fff" stroke-opacity=".75" stroke-width="2" paint-order="stroke" stroke-linejoin="round" opacity="1">Timimoune</text>
<text x="584.2" y="561.6" font-size="11.0" fill="#8a7296" font-family="'Liberation Sans','DejaVu Sans',sans-serif" font-style="italic" textLength="48.7" lengthAdjust="spacingAndGlyphs" stroke="#fff" stroke-opacity=".75" stroke-width="2" paint-order="stroke" stroke-linejoin="round" opacity="1">El Meniaa</text>
<text x="600.3" y="666.3" font-size="11.0" fill="#8a7296" font-family="'Liberation Sans','DejaVu Sans',sans-serif" font-style="italic" textLength="40.2" lengthAdjust="spacingAndGlyphs" stroke="#fff" stroke-opacity=".75" stroke-width="2" paint-order="stroke" stroke-linejoin="round" opacity="1">In Salah</text>
<text x="480.6" y="686.5" font-size="11.0" fill="#8a7296" font-family="'Liberation Sans','DejaVu Sans',sans-serif" font-style="italic" textLength="28.4" lengthAdjust="spacingAndGlyphs" stroke="#fff" stroke-opacity=".75" stroke-width="2" paint-order="stroke" stroke-linejoin="round" opacity="1">Adrar</text>
<text x="516.1" y="623.4" font-size="13.0" fill="#4a4a4a" font-family="'Liberation Sans','DejaVu Sans',sans-serif" textLength="12.2" lengthAdjust="spacingAndGlyphs" stroke="#fff" stroke-opacity=".75" stroke-width="2" paint-order="stroke" stroke-linejoin="round" opacity="1">Al</text>
<text x="509.0" y="639.1" font-size="11.5" fill="#7f6e89" font-family="'DejaVu Sans',sans-serif" textLength="19.3" lengthAdjust="spacingAndGlyphs" stroke="#fff" stroke-opacity=".75" stroke-width="2" paint-order="stroke" stroke-linejoin="round" opacity="1">ⵍⵣ</text>
<text x="529.3" y="631.3" font-size="12.5" fill="#7f6e89" font-family="'Liberation Sans','DejaVu Sans',sans-serif" textLength="73.0" lengthAdjust="spacingAndGlyphs" stroke="#fff" stroke-opacity=".75" stroke-width="2" paint-order="stroke" stroke-linejoin="round" opacity="1">e <tspan font-family="DejaVu Sans">ⵍⵣⵣⴰⵢⴻⵔ</tspan></text>
<text x="529.3" y="648.5" font-size="12.5" fill="#7f6e89" font-family="'DejaVu Sans',sans-serif" textLength="33.5" lengthAdjust="spacingAndGlyphs" stroke="#fff" stroke-opacity=".75" stroke-width="2" paint-order="stroke" stroke-linejoin="round" opacity="1">الجزائر</text>
<text x="97.2" y="615.1" font-size="12.0" fill="#4a4a4a" font-family="'Liberation Sans','DejaVu Sans',sans-serif" textLength="65.3" lengthAdjust="spacingAndGlyphs" stroke="#fff" stroke-opacity=".75" stroke-width="2" paint-order="stroke" stroke-linejoin="round" opacity="1">Las Palmas</text>
<text x="82.9" y="630.7" font-size="12.0" fill="#4a4a4a" font-family="'Liberation Sans','DejaVu Sans',sans-serif" textLength="94.0" lengthAdjust="spacingAndGlyphs" stroke="#fff" stroke-opacity=".75" stroke-width="2" paint-order="stroke" stroke-linejoin="round" opacity="1">de Gran Canaria</text>
</g>
<g stroke-width="1.3">
<circle cx="308.3" cy="162.6" r="7.2" fill="#fff" opacity=".42"/>
<circle cx="333.3" cy="159.0" r="7.2" fill="#fff" opacity=".42"/>
<circle cx="303.8" cy="187.6" r="7.2" fill="#fff" opacity=".42"/>
<circle cx="324.4" cy="181.9" r="7.2" fill="#fff" opacity=".42"/>
<circle cx="359.6" cy="177.2" r="7.2" fill="#fff" opacity=".42"/>
<circle cx="384.6" cy="173.8" r="7.2" fill="#fff" opacity=".42"/>
<circle cx="375.4" cy="139.3" r="7.2" fill="#fff" opacity=".42"/>
<circle cx="382.2" cy="142.2" r="7.2" fill="#fff" opacity=".42"/>
<circle cx="376.3" cy="147.4" r="7.2" fill="#fff" opacity=".42"/>
<circle cx="382.6" cy="146.3" r="7.2" fill="#fff" opacity=".42"/>
<circle cx="424.3" cy="147.7" r="7.2" fill="#fff" opacity=".42"/>
<circle cx="430.3" cy="143.0" r="7.2" fill="#fff" opacity=".42"/>
<circle cx="451.6" cy="146.0" r="7.2" fill="#fff" opacity=".42"/>
<circle cx="452.7" cy="149.4" r="7.2" fill="#fff" opacity=".42"/>
<circle cx="477.2" cy="148.9" r="7.2" fill="#fff" opacity=".42"/>
<circle cx="482.8" cy="147.7" r="7.2" fill="#fff" opacity=".42"/>
<circle cx="459.5" cy="164.8" r="7.2" fill="#fff" opacity=".42"/>
<circle cx="465.5" cy="178.2" r="7.2" fill="#fff" opacity=".42"/>
<circle cx="433.4" cy="181.8" r="7.2" fill="#fff" opacity=".42"/>
<circle cx="410.7" cy="195.5" r="7.2" fill="#fff" opacity=".42"/>
<circle cx="404.9" cy="205.9" r="7.2" fill="#fff" opacity=".42"/>
<circle cx="379.0" cy="211.4" r="7.2" fill="#fff" opacity=".42"/>
<circle cx="382.4" cy="230.6" r="7.2" fill="#fff" opacity=".42"/>
<circle cx="421.1" cy="231.7" r="7.2" fill="#fff" opacity=".42"/>
<circle cx="408.6" cy="241.0" r="7.2" fill="#fff" opacity=".42"/>
<circle cx="447.6" cy="240.6" r="7.2" fill="#fff" opacity=".42"/>
<circle cx="404.0" cy="264.9" r="7.2" fill="#fff" opacity=".42"/>
<circle cx="425.6" cy="266.5" r="7.2" fill="#fff" opacity=".42"/>
<circle cx="478.0" cy="255.5" r="7.2" fill="#fff" opacity=".42"/>
<circle cx="426.7" cy="297.4" r="7.2" fill="#fff" opacity=".42"/>
<circle cx="480.2" cy="297.6" r="7.2" fill="#fff" opacity=".42"/>
<circle cx="362.0" cy="284.0" r="7.2" fill="#fff" opacity=".42"/>
<circle cx="362.9" cy="297.7" r="7.2" fill="#fff" opacity=".42"/>
<circle cx="351.6" cy="301.3" r="7.2" fill="#fff" opacity=".42"/>
<circle cx="517.7" cy="189.8" r="7.2" fill="#fff" opacity=".42"/>
<circle cx="543.9" cy="206.8" r="7.2" fill="#fff" opacity=".42"/>
<circle cx="602.9" cy="194.3" r="7.2" fill="#fff" opacity=".42"/>
<circle cx="572.9" cy="220.4" r="7.2" fill="#fff" opacity=".42"/>
<circle cx="559.3" cy="223.6" r="7.2" fill="#fff" opacity=".42"/>
<circle cx="562.2" cy="224.0" r="7.2" fill="#fff" opacity=".42"/>
<circle cx="527.6" cy="262.8" r="7.2" fill="#fff" opacity=".42"/>
<circle cx="524.7" cy="265.2" r="7.2" fill="#fff" opacity=".42"/>
<circle cx="522.2" cy="273.7" r="7.2" fill="#fff" opacity=".42"/>
<circle cx="516.2" cy="278.4" r="7.2" fill="#fff" opacity=".42"/>
<circle cx="519.8" cy="282.2" r="7.2" fill="#fff" opacity=".42"/>
<circle cx="514.4" cy="283.5" r="7.2" fill="#fff" opacity=".42"/>
<circle cx="523.4" cy="296.5" r="7.2" fill="#fff" opacity=".42"/>
<circle cx="515.2" cy="306.8" r="7.2" fill="#fff" opacity=".42"/>
<circle cx="525.8" cy="311.5" r="7.2" fill="#fff" opacity=".42"/>
<circle cx="507.3" cy="313.5" r="7.2" fill="#fff" opacity=".42"/>
<circle cx="515.0" cy="316.2" r="7.2" fill="#fff" opacity=".42"/>
<circle cx="512.1" cy="321.9" r="7.2" fill="#fff" opacity=".42"/>
<circle cx="498.3" cy="324.0" r="7.2" fill="#fff" opacity=".42"/>
<circle cx="511.2" cy="329.6" r="7.2" fill="#fff" opacity=".42"/>
<circle cx="500.3" cy="332.0" r="7.2" fill="#fff" opacity=".42"/>
<circle cx="504.0" cy="341.0" r="7.2" fill="#fff" opacity=".42"/>
<circle cx="483.5" cy="339.8" r="7.2" fill="#fff" opacity=".42"/>
<circle cx="468.7" cy="366.0" r="7.2" fill="#fff" opacity=".42"/>
<circle cx="460.5" cy="369.3" r="7.2" fill="#fff" opacity=".42"/>
<circle cx="457.0" cy="370.7" r="7.2" fill="#fff" opacity=".42"/>
<circle cx="434.8" cy="326.3" r="7.2" fill="#fff" opacity=".42"/>
<circle cx="432.3" cy="335.4" r="7.2" fill="#fff" opacity=".42"/>
<circle cx="435.8" cy="355.9" r="7.2" fill="#fff" opacity=".42"/>
<circle cx="349.4" cy="353.7" r="7.2" fill="#fff" opacity=".42"/>
<circle cx="374.5" cy="353.2" r="7.2" fill="#fff" opacity=".42"/>
<circle cx="379.0" cy="352.6" r="7.2" fill="#fff" opacity=".42"/>
<circle cx="379.0" cy="359.4" r="7.2" fill="#fff" opacity=".42"/>
<circle cx="374.4" cy="373.0" r="7.2" fill="#fff" opacity=".42"/>
<circle cx="365.5" cy="378.2" r="7.2" fill="#fff" opacity=".42"/>
<circle cx="368.8" cy="380.2" r="7.2" fill="#fff" opacity=".42"/>
<circle cx="370.9" cy="382.3" r="7.2" fill="#fff" opacity=".42"/>
<circle cx="395.4" cy="379.5" r="7.2" fill="#fff" opacity=".42"/>
<circle cx="402.2" cy="377.3" r="7.2" fill="#fff" opacity=".42"/>
<circle cx="409.4" cy="376.4" r="7.2" fill="#fff" opacity=".42"/>
<circle cx="412.0" cy="372.9" r="7.2" fill="#fff" opacity=".42"/>
<circle cx="414.2" cy="369.3" r="7.2" fill="#fff" opacity=".42"/>
<circle cx="418.3" cy="369.8" r="7.2" fill="#fff" opacity=".42"/>
<circle cx="421.9" cy="369.3" r="7.2" fill="#fff" opacity=".42"/>
<circle cx="390.8" cy="397.7" r="7.2" fill="#fff" opacity=".42"/>
<circle cx="453.0" cy="417.5" r="7.2" fill="#fff" opacity=".42"/>
<circle cx="599.7" cy="277.5" r="7.2" fill="#fff" opacity=".42"/>
<circle cx="108.9" cy="622.8" r="7.2" fill="#fff" opacity=".42"/>
<circle cx="177.4" cy="610.3" r="7.2" fill="#fff" opacity=".42"/>
<circle cx="425.7" cy="240.6" r="7.2" fill="#fff" opacity=".42"/>
<circle cx="426.5" cy="246.3" r="7.2" fill="#fff" opacity=".42"/>
<circle cx="427.2" cy="252.0" r="7.2" fill="#fff" opacity=".42"/>
<circle cx="430.5" cy="255.5" r="7.2" fill="#fff" opacity=".42"/>
<circle cx="582.0" cy="220.5" r="7.2" fill="#fff" opacity=".42"/>
<circle cx="432.2" cy="239.9" r="7.2" fill="#fff" opacity=".42"/>
<circle cx="436.5" cy="242.7" r="7.2" fill="#fff" opacity=".42"/>
<circle cx="433.8" cy="246.0" r="7.2" fill="#fff" opacity=".42"/>
<circle cx="438.5" cy="247.2" r="7.2" fill="#fff" opacity=".42"/>
<circle cx="441.5" cy="246.7" r="7.2" fill="#fff" opacity=".42"/>
<circle cx="432.6" cy="251.6" r="7.2" fill="#fff" opacity=".42"/>
<circle cx="576.8" cy="204.0" r="7.2" fill="#fff" opacity=".42"/>
<circle cx="587.2" cy="207.2" r="7.2" fill="#fff" opacity=".42"/>
<circle cx="592.6" cy="209.7" r="7.2" fill="#fff" opacity=".42"/>
<circle cx="373.0" cy="347.8" r="6.3" fill="#27cc27" fill-opacity=".92" stroke="#1c8a1c"/>
<circle cx="308.3" cy="162.6" r="4.5" fill="#3f95ff" fill-opacity=".85" stroke="#1b50d8"/><circle cx="308.3" cy="162.6" r="1.1" fill="#1b6fd8" stroke="none"/>
<circle cx="333.3" cy="159.0" r="4.5" fill="#3f95ff" fill-opacity=".85" stroke="#1b50d8"/><circle cx="333.3" cy="159.0" r="1.1" fill="#1b6fd8" stroke="none"/>
<circle cx="303.8" cy="187.6" r="4.5" fill="#3f95ff" fill-opacity=".85" stroke="#1b50d8"/><circle cx="303.8" cy="187.6" r="1.1" fill="#1b6fd8" stroke="none"/>
<circle cx="324.4" cy="181.9" r="4.5" fill="#3f95ff" fill-opacity=".85" stroke="#1b50d8"/><circle cx="324.4" cy="181.9" r="1.1" fill="#1b6fd8" stroke="none"/>
<circle cx="359.6" cy="177.2" r="4.5" fill="#3f95ff" fill-opacity=".85" stroke="#1b50d8"/><circle cx="359.6" cy="177.2" r="1.1" fill="#1b6fd8" stroke="none"/>
<circle cx="384.6" cy="173.8" r="4.5" fill="#3f95ff" fill-opacity=".85" stroke="#1b50d8"/><circle cx="384.6" cy="173.8" r="1.1" fill="#1b6fd8" stroke="none"/>
<circle cx="375.4" cy="139.3" r="4.5" fill="#3f95ff" fill-opacity=".85" stroke="#1b50d8"/><circle cx="375.4" cy="139.3" r="1.1" fill="#1b6fd8" stroke="none"/>
<circle cx="382.2" cy="142.2" r="4.5" fill="#3f95ff" fill-opacity=".85" stroke="#1b50d8"/><circle cx="382.2" cy="142.2" r="1.1" fill="#1b6fd8" stroke="none"/>
<circle cx="376.3" cy="147.4" r="4.5" fill="#3f95ff" fill-opacity=".85" stroke="#1b50d8"/><circle cx="376.3" cy="147.4" r="1.1" fill="#1b6fd8" stroke="none"/>
<circle cx="382.6" cy="146.3" r="4.5" fill="#3f95ff" fill-opacity=".85" stroke="#1b50d8"/><circle cx="382.6" cy="146.3" r="1.1" fill="#1b6fd8" stroke="none"/>
<circle cx="424.3" cy="147.7" r="4.5" fill="#3f95ff" fill-opacity=".85" stroke="#1b50d8"/><circle cx="424.3" cy="147.7" r="1.1" fill="#1b6fd8" stroke="none"/>
<circle cx="430.3" cy="143.0" r="4.5" fill="#3f95ff" fill-opacity=".85" stroke="#1b50d8"/><circle cx="430.3" cy="143.0" r="1.1" fill="#1b6fd8" stroke="none"/>
<circle cx="451.6" cy="146.0" r="4.5" fill="#3f95ff" fill-opacity=".85" stroke="#1b50d8"/><circle cx="451.6" cy="146.0" r="1.1" fill="#1b6fd8" stroke="none"/>
<circle cx="452.7" cy="149.4" r="4.5" fill="#3f95ff" fill-opacity=".85" stroke="#1b50d8"/><circle cx="452.7" cy="149.4" r="1.1" fill="#1b6fd8" stroke="none"/>
<circle cx="477.2" cy="148.9" r="4.5" fill="#3f95ff" fill-opacity=".85" stroke="#1b50d8"/><circle cx="477.2" cy="148.9" r="1.1" fill="#1b6fd8" stroke="none"/>
<circle cx="482.8" cy="147.7" r="4.5" fill="#3f95ff" fill-opacity=".85" stroke="#1b50d8"/><circle cx="482.8" cy="147.7" r="1.1" fill="#1b6fd8" stroke="none"/>
<circle cx="459.5" cy="164.8" r="4.5" fill="#3f95ff" fill-opacity=".85" stroke="#1b50d8"/><circle cx="459.5" cy="164.8" r="1.1" fill="#1b6fd8" stroke="none"/>
<circle cx="465.5" cy="178.2" r="4.5" fill="#3f95ff" fill-opacity=".85" stroke="#1b50d8"/><circle cx="465.5" cy="178.2" r="1.1" fill="#1b6fd8" stroke="none"/>
<circle cx="433.4" cy="181.8" r="4.5" fill="#3f95ff" fill-opacity=".85" stroke="#1b50d8"/><circle cx="433.4" cy="181.8" r="1.1" fill="#1b6fd8" stroke="none"/>
<circle cx="410.7" cy="195.5" r="4.5" fill="#3f95ff" fill-opacity=".85" stroke="#1b50d8"/><circle cx="410.7" cy="195.5" r="1.1" fill="#1b6fd8" stroke="none"/>
<circle cx="404.9" cy="205.9" r="4.5" fill="#3f95ff" fill-opacity=".85" stroke="#1b50d8"/><circle cx="404.9" cy="205.9" r="1.1" fill="#1b6fd8" stroke="none"/>
<circle cx="379.0" cy="211.4" r="4.5" fill="#3f95ff" fill-opacity=".85" stroke="#1b50d8"/><circle cx="379.0" cy="211.4" r="1.1" fill="#1b6fd8" stroke="none"/>
<circle cx="382.4" cy="230.6" r="4.5" fill="#3f95ff" fill-opacity=".85" stroke="#1b50d8"/><circle cx="382.4" cy="230.6" r="1.1" fill="#1b6fd8" stroke="none"/>
<circle cx="421.1" cy="231.7" r="4.5" fill="#3f95ff" fill-opacity=".85" stroke="#1b50d8"/><circle cx="421.1" cy="231.7" r="1.1" fill="#1b6fd8" stroke="none"/>
<circle cx="408.6" cy="241.0" r="4.5" fill="#3f95ff" fill-opacity=".85" stroke="#1b50d8"/><circle cx="408.6" cy="241.0" r="1.1" fill="#1b6fd8" stroke="none"/>
<circle cx="447.6" cy="240.6" r="4.5" fill="#3f95ff" fill-opacity=".85" stroke="#1b50d8"/><circle cx="447.6" cy="240.6" r="1.1" fill="#1b6fd8" stroke="none"/>
<circle cx="404.0" cy="264.9" r="4.5" fill="#3f95ff" fill-opacity=".85" stroke="#1b50d8"/><circle cx="404.0" cy="264.9" r="1.1" fill="#1b6fd8" stroke="none"/>
<circle cx="425.6" cy="266.5" r="4.5" fill="#3f95ff" fill-opacity=".85" stroke="#1b50d8"/><circle cx="425.6" cy="266.5" r="1.1" fill="#1b6fd8" stroke="none"/>
<circle cx="478.0" cy="255.5" r="4.5" fill="#3f95ff" fill-opacity=".85" stroke="#1b50d8"/><circle cx="478.0" cy="255.5" r="1.1" fill="#1b6fd8" stroke="none"/>
<circle cx="426.7" cy="297.4" r="4.5" fill="#3f95ff" fill-opacity=".85" stroke="#1b50d8"/><circle cx="426.7" cy="297.4" r="1.1" fill="#1b6fd8" stroke="none"/>
<circle cx="480.2" cy="297.6" r="4.5" fill="#3f95ff" fill-opacity=".85" stroke="#1b50d8"/><circle cx="480.2" cy="297.6" r="1.1" fill="#1b6fd8" stroke="none"/>
<circle cx="362.0" cy="284.0" r="4.5" fill="#3f95ff" fill-opacity=".85" stroke="#1b50d8"/><circle cx="362.0" cy="284.0" r="1.1" fill="#1b6fd8" stroke="none"/>
<circle cx="362.9" cy="297.7" r="4.5" fill="#3f95ff" fill-opacity=".85" stroke="#1b50d8"/><circle cx="362.9" cy="297.7" r="1.1" fill="#1b6fd8" stroke="none"/>
<circle cx="351.6" cy="301.3" r="4.5" fill="#3f95ff" fill-opacity=".85" stroke="#1b50d8"/><circle cx="351.6" cy="301.3" r="1.1" fill="#1b6fd8" stroke="none"/>
<circle cx="517.7" cy="189.8" r="4.5" fill="#3f95ff" fill-opacity=".85" stroke="#1b50d8"/><circle cx="517.7" cy="189.8" r="1.1" fill="#1b6fd8" stroke="none"/>
<circle cx="543.9" cy="206.8" r="4.5" fill="#3f95ff" fill-opacity=".85" stroke="#1b50d8"/><circle cx="543.9" cy="206.8" r="1.1" fill="#1b6fd8" stroke="none"/>
<circle cx="602.9" cy="194.3" r="4.5" fill="#3f95ff" fill-opacity=".85" stroke="#1b50d8"/><circle cx="602.9" cy="194.3" r="1.1" fill="#1b6fd8" stroke="none"/>
<circle cx="572.9" cy="220.4" r="4.5" fill="#3f95ff" fill-opacity=".85" stroke="#1b50d8"/><circle cx="572.9" cy="220.4" r="1.1" fill="#1b6fd8" stroke="none"/>
<circle cx="559.3" cy="223.6" r="4.5" fill="#3f95ff" fill-opacity=".85" stroke="#1b50d8"/><circle cx="559.3" cy="223.6" r="1.1" fill="#1b6fd8" stroke="none"/>
<circle cx="562.2" cy="224.0" r="4.5" fill="#3f95ff" fill-opacity=".85" stroke="#1b50d8"/><circle cx="562.2" cy="224.0" r="1.1" fill="#1b6fd8" stroke="none"/>
<circle cx="527.6" cy="262.8" r="4.5" fill="#3f95ff" fill-opacity=".85" stroke="#1b50d8"/><circle cx="527.6" cy="262.8" r="1.1" fill="#1b6fd8" stroke="none"/>
<circle cx="524.7" cy="265.2" r="4.5" fill="#3f95ff" fill-opacity=".85" stroke="#1b50d8"/><circle cx="524.7" cy="265.2" r="1.1" fill="#1b6fd8" stroke="none"/>
<circle cx="522.2" cy="273.7" r="4.5" fill="#3f95ff" fill-opacity=".85" stroke="#1b50d8"/><circle cx="522.2" cy="273.7" r="1.1" fill="#1b6fd8" stroke="none"/>
<circle cx="516.2" cy="278.4" r="4.5" fill="#3f95ff" fill-opacity=".85" stroke="#1b50d8"/><circle cx="516.2" cy="278.4" r="1.1" fill="#1b6fd8" stroke="none"/>
<circle cx="519.8" cy="282.2" r="4.5" fill="#3f95ff" fill-opacity=".85" stroke="#1b50d8"/><circle cx="519.8" cy="282.2" r="1.1" fill="#1b6fd8" stroke="none"/>
<circle cx="514.4" cy="283.5" r="4.5" fill="#3f95ff" fill-opacity=".85" stroke="#1b50d8"/><circle cx="514.4" cy="283.5" r="1.1" fill="#1b6fd8" stroke="none"/>
<circle cx="523.4" cy="296.5" r="4.5" fill="#3f95ff" fill-opacity=".85" stroke="#1b50d8"/><circle cx="523.4" cy="296.5" r="1.1" fill="#1b6fd8" stroke="none"/>
<circle cx="515.2" cy="306.8" r="4.5" fill="#3f95ff" fill-opacity=".85" stroke="#1b50d8"/><circle cx="515.2" cy="306.8" r="1.1" fill="#1b6fd8" stroke="none"/>
<circle cx="525.8" cy="311.5" r="4.5" fill="#3f95ff" fill-opacity=".85" stroke="#1b50d8"/><circle cx="525.8" cy="311.5" r="1.1" fill="#1b6fd8" stroke="none"/>
<circle cx="507.3" cy="313.5" r="4.5" fill="#3f95ff" fill-opacity=".85" stroke="#1b50d8"/><circle cx="507.3" cy="313.5" r="1.1" fill="#1b6fd8" stroke="none"/>
<circle cx="515.0" cy="316.2" r="4.5" fill="#3f95ff" fill-opacity=".85" stroke="#1b50d8"/><circle cx="515.0" cy="316.2" r="1.1" fill="#1b6fd8" stroke="none"/>
<circle cx="512.1" cy="321.9" r="4.5" fill="#3f95ff" fill-opacity=".85" stroke="#1b50d8"/><circle cx="512.1" cy="321.9" r="1.1" fill="#1b6fd8" stroke="none"/>
<circle cx="498.3" cy="324.0" r="4.5" fill="#3f95ff" fill-opacity=".85" stroke="#1b50d8"/><circle cx="498.3" cy="324.0" r="1.1" fill="#1b6fd8" stroke="none"/>
<circle cx="511.2" cy="329.6" r="4.5" fill="#3f95ff" fill-opacity=".85" stroke="#1b50d8"/><circle cx="511.2" cy="329.6" r="1.1" fill="#1b6fd8" stroke="none"/>
<circle cx="500.3" cy="332.0" r="4.5" fill="#3f95ff" fill-opacity=".85" stroke="#1b50d8"/><circle cx="500.3" cy="332.0" r="1.1" fill="#1b6fd8" stroke="none"/>
<circle cx="504.0" cy="341.0" r="4.5" fill="#3f95ff" fill-opacity=".85" stroke="#1b50d8"/><circle cx="504.0" cy="341.0" r="1.1" fill="#1b6fd8" stroke="none"/>
<circle cx="483.5" cy="339.8" r="4.5" fill="#3f95ff" fill-opacity=".85" stroke="#1b50d8"/><circle cx="483.5" cy="339.8" r="1.1" fill="#1b6fd8" stroke="none"/>
<circle cx="468.7" cy="366.0" r="4.5" fill="#3f95ff" fill-opacity=".85" stroke="#1b50d8"/><circle cx="468.7" cy="366.0" r="1.1" fill="#1b6fd8" stroke="none"/>
<circle cx="460.5" cy="369.3" r="4.5" fill="#3f95ff" fill-opacity=".85" stroke="#1b50d8"/><circle cx="460.5" cy="369.3" r="1.1" fill="#1b6fd8" stroke="none"/>
<circle cx="457.0" cy="370.7" r="4.5" fill="#3f95ff" fill-opacity=".85" stroke="#1b50d8"/><circle cx="457.0" cy="370.7" r="1.1" fill="#1b6fd8" stroke="none"/>
<circle cx="434.8" cy="326.3" r="4.5" fill="#3f95ff" fill-opacity=".85" stroke="#1b50d8"/><circle cx="434.8" cy="326.3" r="1.1" fill="#1b6fd8" stroke="none"/>
<circle cx="432.3" cy="335.4" r="4.5" fill="#3f95ff" fill-opacity=".85" stroke="#1b50d8"/><circle cx="432.3" cy="335.4" r="1.1" fill="#1b6fd8" stroke="none"/>
<circle cx="435.8" cy="355.9" r="4.5" fill="#3f95ff" fill-opacity=".85" stroke="#1b50d8"/><circle cx="435.8" cy="355.9" r="1.1" fill="#1b6fd8" stroke="none"/>
<circle cx="349.4" cy="353.7" r="4.5" fill="#3f95ff" fill-opacity=".85" stroke="#1b50d8"/><circle cx="349.4" cy="353.7" r="1.1" fill="#1b6fd8" stroke="none"/>
<circle cx="374.5" cy="353.2" r="4.5" fill="#3f95ff" fill-opacity=".85" stroke="#1b50d8"/><circle cx="374.5" cy="353.2" r="1.1" fill="#1b6fd8" stroke="none"/>
<circle cx="379.0" cy="352.6" r="4.5" fill="#3f95ff" fill-opacity=".85" stroke="#1b50d8"/><circle cx="379.0" cy="352.6" r="1.1" fill="#1b6fd8" stroke="none"/>
<circle cx="379.0" cy="359.4" r="4.5" fill="#3f95ff" fill-opacity=".85" stroke="#1b50d8"/><circle cx="379.0" cy="359.4" r="1.1" fill="#1b6fd8" stroke="none"/>
<circle cx="374.4" cy="373.0" r="4.5" fill="#3f95ff" fill-opacity=".85" stroke="#1b50d8"/><circle cx="374.4" cy="373.0" r="1.1" fill="#1b6fd8" stroke="none"/>
<circle cx="365.5" cy="378.2" r="4.5" fill="#3f95ff" fill-opacity=".85" stroke="#1b50d8"/><circle cx="365.5" cy="378.2" r="1.1" fill="#1b6fd8" stroke="none"/>
<circle cx="368.8" cy="380.2" r="4.5" fill="#3f95ff" fill-opacity=".85" stroke="#1b50d8"/><circle cx="368.8" cy="380.2" r="1.1" fill="#1b6fd8" stroke="none"/>
<circle cx="370.9" cy="382.3" r="4.5" fill="#3f95ff" fill-opacity=".85" stroke="#1b50d8"/><circle cx="370.9" cy="382.3" r="1.1" fill="#1b6fd8" stroke="none"/>
<circle cx="395.4" cy="379.5" r="4.5" fill="#3f95ff" fill-opacity=".85" stroke="#1b50d8"/><circle cx="395.4" cy="379.5" r="1.1" fill="#1b6fd8" stroke="none"/>
<circle cx="402.2" cy="377.3" r="4.5" fill="#3f95ff" fill-opacity=".85" stroke="#1b50d8"/><circle cx="402.2" cy="377.3" r="1.1" fill="#1b6fd8" stroke="none"/>
<circle cx="409.4" cy="376.4" r="4.5" fill="#3f95ff" fill-opacity=".85" stroke="#1b50d8"/><circle cx="409.4" cy="376.4" r="1.1" fill="#1b6fd8" stroke="none"/>
<circle cx="412.0" cy="372.9" r="4.5" fill="#3f95ff" fill-opacity=".85" stroke="#1b50d8"/><circle cx="412.0" cy="372.9" r="1.1" fill="#1b6fd8" stroke="none"/>
<circle cx="414.2" cy="369.3" r="4.5" fill="#3f95ff" fill-opacity=".85" stroke="#1b50d8"/><circle cx="414.2" cy="369.3" r="1.1" fill="#1b6fd8" stroke="none"/>
<circle cx="418.3" cy="369.8" r="4.5" fill="#3f95ff" fill-opacity=".85" stroke="#1b50d8"/><circle cx="418.3" cy="369.8" r="1.1" fill="#1b6fd8" stroke="none"/>
<circle cx="421.9" cy="369.3" r="4.5" fill="#3f95ff" fill-opacity=".85" stroke="#1b50d8"/><circle cx="421.9" cy="369.3" r="1.1" fill="#1b6fd8" stroke="none"/>
<circle cx="390.8" cy="397.7" r="4.5" fill="#3f95ff" fill-opacity=".85" stroke="#1b50d8"/><circle cx="390.8" cy="397.7" r="1.1" fill="#1b6fd8" stroke="none"/>
<circle cx="453.0" cy="417.5" r="4.5" fill="#3f95ff" fill-opacity=".85" stroke="#1b50d8"/><circle cx="453.0" cy="417.5" r="1.1" fill="#1b6fd8" stroke="none"/>
<circle cx="599.7" cy="277.5" r="4.5" fill="#3f95ff" fill-opacity=".85" stroke="#1b50d8"/><circle cx="599.7" cy="277.5" r="1.1" fill="#1b6fd8" stroke="none"/>
<circle cx="108.9" cy="622.8" r="4.5" fill="#3f95ff" fill-opacity=".85" stroke="#1b50d8"/><circle cx="108.9" cy="622.8" r="1.1" fill="#1b6fd8" stroke="none"/>
<circle cx="177.4" cy="610.3" r="4.5" fill="#3f95ff" fill-opacity=".85" stroke="#1b50d8"/><circle cx="177.4" cy="610.3" r="1.1" fill="#1b6fd8" stroke="none"/>
<circle cx="425.7" cy="240.6" r="4.5" fill="#3f95ff" fill-opacity=".85" stroke="#1b50d8"/><circle cx="425.7" cy="240.6" r="1.1" fill="#1b6fd8" stroke="none"/>
<circle cx="426.5" cy="246.3" r="4.5" fill="#3f95ff" fill-opacity=".85" stroke="#1b50d8"/><circle cx="426.5" cy="246.3" r="1.1" fill="#1b6fd8" stroke="none"/>
<circle cx="427.2" cy="252.0" r="4.5" fill="#3f95ff" fill-opacity=".85" stroke="#1b50d8"/><circle cx="427.2" cy="252.0" r="1.1" fill="#1b6fd8" stroke="none"/>
<circle cx="430.5" cy="255.5" r="4.5" fill="#3f95ff" fill-opacity=".85" stroke="#1b50d8"/><circle cx="430.5" cy="255.5" r="1.1" fill="#1b6fd8" stroke="none"/>
<circle cx="582.0" cy="220.5" r="4.5" fill="#3f95ff" fill-opacity=".85" stroke="#1b50d8"/><circle cx="582.0" cy="220.5" r="1.1" fill="#1b6fd8" stroke="none"/>
<circle cx="565.6" cy="298.2" r="4.6" fill="#1f6fe8" fill-opacity=".9" stroke="#1540c0"/>
<circle cx="128.6" cy="635.3" r="4.6" fill="#1f6fe8" fill-opacity=".9" stroke="#1540c0"/>
<circle cx="125.0" cy="643.3" r="4.6" fill="#1f6fe8" fill-opacity=".9" stroke="#1540c0"/>
<circle cx="127.6" cy="642.6" r="4.6" fill="#1f6fe8" fill-opacity=".9" stroke="#1540c0"/>
<circle cx="311.9" cy="146.5" r="6.3" fill="#27cc27" fill-opacity=".92" stroke="#1c8a1c"/>
<circle cx="306.2" cy="179.6" r="6.3" fill="#27cc27" fill-opacity=".92" stroke="#1c8a1c"/>
<circle cx="486.8" cy="166.1" r="6.3" fill="#27cc27" fill-opacity=".92" stroke="#1c8a1c"/>
<circle cx="506.3" cy="206.8" r="6.3" fill="#27cc27" fill-opacity=".92" stroke="#1c8a1c"/>
<circle cx="405.2" cy="333.1" r="6.3" fill="#27cc27" fill-opacity=".92" stroke="#1c8a1c"/>
<circle cx="390.3" cy="388.0" r="6.3" fill="#27cc27" fill-opacity=".92" stroke="#1c8a1c"/>
<circle cx="432.0" cy="247.5" r="5.6" fill="#14b014" fill-opacity=".95" stroke="#0f6e1c"/>
<circle cx="436.2" cy="253.2" r="5.8" fill="#14b014" fill-opacity=".95" stroke="#0f6e1c"/>
<circle cx="580.5" cy="213.8" r="5.8" fill="#14b014" fill-opacity=".95" stroke="#0f6e1c"/>
<circle cx="586.3" cy="216.3" r="5.8" fill="#14b014" fill-opacity=".95" stroke="#0f6e1c"/>
<circle cx="583.2" cy="218.2" r="5.2" fill="#14b014" fill-opacity=".95" stroke="#0f6e1c"/>
<circle cx="432.2" cy="239.9" r="4.5" fill="#2f80ff" fill-opacity=".92" stroke="#1b50d8"/><circle cx="432.2" cy="239.9" r="1.1" fill="#1b6fd8" stroke="none"/>
<circle cx="436.5" cy="242.7" r="4.5" fill="#2f80ff" fill-opacity=".92" stroke="#1b50d8"/><circle cx="436.5" cy="242.7" r="1.1" fill="#1b6fd8" stroke="none"/>
<circle cx="433.8" cy="246.0" r="4.5" fill="#2f80ff" fill-opacity=".92" stroke="#1b50d8"/><circle cx="433.8" cy="246.0" r="1.1" fill="#1b6fd8" stroke="none"/>
<circle cx="438.5" cy="247.2" r="4.5" fill="#2f80ff" fill-opacity=".92" stroke="#1b50d8"/><circle cx="438.5" cy="247.2" r="1.1" fill="#1b6fd8" stroke="none"/>
<circle cx="441.5" cy="246.7" r="4.5" fill="#2f80ff" fill-opacity=".92" stroke="#1b50d8"/><circle cx="441.5" cy="246.7" r="1.1" fill="#1b6fd8" stroke="none"/>
<circle cx="432.6" cy="251.6" r="4.5" fill="#2f80ff" fill-opacity=".92" stroke="#1b50d8"/><circle cx="432.6" cy="251.6" r="1.1" fill="#1b6fd8" stroke="none"/>
<circle cx="576.8" cy="204.0" r="4.5" fill="#2f80ff" fill-opacity=".92" stroke="#1b50d8"/><circle cx="576.8" cy="204.0" r="1.1" fill="#1b6fd8" stroke="none"/>
<circle cx="587.2" cy="207.2" r="4.5" fill="#2f80ff" fill-opacity=".92" stroke="#1b50d8"/><circle cx="587.2" cy="207.2" r="1.1" fill="#1b6fd8" stroke="none"/>
<circle cx="592.6" cy="209.7" r="4.5" fill="#2f80ff" fill-opacity=".92" stroke="#1b50d8"/><circle cx="592.6" cy="209.7" r="1.1" fill="#1b6fd8" stroke="none"/>
<circle cx="440.4" cy="253.5" r="2.9" fill="#6b8f4e" stroke="#1d5c1d" stroke-width="1.4"/>
<circle cx="315.5" cy="140.7" r="2.6" fill="#8c8c8c" stroke="#2e2e2e" stroke-width="1.15"/>
<circle cx="433.4" cy="262.5" r="2.6" fill="#8c8c8c" stroke="#2e2e2e" stroke-width="1.15"/>
<circle cx="365.2" cy="368.4" r="2.6" fill="#8c8c8c" stroke="#2e2e2e" stroke-width="1.15"/>
<circle cx="438.9" cy="370.5" r="2.6" fill="#8c8c8c" stroke="#2e2e2e" stroke-width="1.15"/>
<circle cx="504.8" cy="327.2" r="2.6" fill="#8c8c8c" stroke="#2e2e2e" stroke-width="1.15"/>
<circle cx="593.8" cy="278.4" r="2.6" fill="#8c8c8c" stroke="#2e2e2e" stroke-width="1.15"/>
<circle cx="606.9" cy="275.1" r="2.6" fill="#8c8c8c" stroke="#2e2e2e" stroke-width="1.15"/>
<circle cx="635.0" cy="263.5" r="2.6" fill="#8c8c8c" stroke="#2e2e2e" stroke-width="1.15"/>
<circle cx="566.6" cy="307.0" r="2.6" fill="#8c8c8c" stroke="#2e2e2e" stroke-width="1.15"/>
<circle cx="67.2" cy="618.3" r="2.6" fill="#8c8c8c" stroke="#2e2e2e" stroke-width="1.15"/>
<circle cx="62.7" cy="646.9" r="2.6" fill="#8c8c8c" stroke="#2e2e2e" stroke-width="1.15"/>
<circle cx="82.9" cy="635.7" r="2.6" fill="#8c8c8c" stroke="#2e2e2e" stroke-width="1.15"/>
<circle cx="99.9" cy="631.7" r="2.6" fill="#8c8c8c" stroke="#2e2e2e" stroke-width="1.15"/>
<circle cx="97.6" cy="636.5" r="2.6" fill="#8c8c8c" stroke="#2e2e2e" stroke-width="1.15"/>
<circle cx="100.5" cy="635.3" r="2.6" fill="#8c8c8c" stroke="#2e2e2e" stroke-width="1.15"/>
<circle cx="130.0" cy="638.9" r="2.6" fill="#8c8c8c" stroke="#2e2e2e" stroke-width="1.15"/>
<circle cx="166.1" cy="626.7" r="2.6" fill="#8c8c8c" stroke="#2e2e2e" stroke-width="1.15"/>
</g>
<g font-family="'Liberation Sans',sans-serif" fill="#fff" font-weight="bold" style="filter:drop-shadow(0 0 1.2px rgba(0,0,0,.55))">
<text x="632.8" y="652.8" font-size="6.2" textLength="38" lengthAdjust="spacingAndGlyphs">POWERED BY</text>
<text x="630.5" y="669.6" font-size="30" letter-spacing="-1.5" textLength="50" lengthAdjust="spacingAndGlyphs">esri</text>
<circle cx="676.5" cy="650" r="2.4"/>
</g>
<!--/MAP-->
</svg>
</div>
<div class="abs" style="left:19.7px;top:136.9px;width:36.2px;height:35.9px;border-radius:5.5px;background:#187c68">
<svg width="36" height="36" viewBox="0 0 36 36" style="position:absolute;left:0;top:0"><path d="M8.9 10.8h18.2M8.9 18.1h18.2M8.9 25.500h18.2" stroke="#dcfff6" stroke-width="1.7" stroke-linecap="round" fill="none"/></svg>
</div>

<div class="box" style="left:5px;top:3.5px;width:281px;height:106px"></div>
<div class="lbl" style="left:26px;top:16px;font-weight:bold">ZBE / Territorio Insular</div>
<div class="dd" style="left:23px;top:37.5px;width:245px"><span>Todas</span><svg width="16" height="9" viewBox="0 0 16 9"><path d="M1 1l7 7 7-7" stroke="#666" stroke-width="1.1" fill="none"/></svg></div>

<div class="pill" style="top:6.500px;background:#0ccb0c">VIGENTE<i></i></div>
<div class="pill" style="top:43.5px;background:#1e90ff">EN TRÁMITE<i></i></div>
<div class="pill" style="top:81px;background:#666">PENDIENTE<i></i></div>

<div class="box" style="left:414.5px;top:3.5px;width:279.500px;height:106px"></div>
<div class="lbl" style="left:436px;top:16px;color:#222">Restricción</div>
<div class="dd" style="left:432.5px;top:37.5px;width:243.500px"><span>Todas</span><svg width="16" height="9" viewBox="0 0 16 9"><path d="M1 1l7 7 7-7" stroke="#666" stroke-width="1.1" fill="none"/></svg></div>

<div id="title">ZONAS DE BAJAS EMISIONES DE ESPAÑA</div>
<div id="sub">Para consultar la información particular de cada ZBE, selecciona un municipio/territorio<br>insular en el desplegable</div>

<div class="tab on" style="left:721px;width:115px">Información</div>
<div class="tab" style="left:844px;width:113px">Restricciones</div>
<div class="tab" style="left:968.5px;width:112.500px">Excepciones</div>
<div class="tab" style="left:1091px;width:112.500px">Calendario</div>

<div id="panel">
<div id="hdr"><span>ZBE / Territorio insular</span></div>
</div>
<div class="u" style="left:862px;width:200px;top:179.5px;font-size:18px">Información</div>
<div class="b" style="left:711px;width:500px;top:287.2px;line-height:22.2px">&nbsp;&nbsp;&nbsp;Selecciona una Zona de Bajas Emisiones o Territorio<br>insular en el desplegable para visualizar la información<br>disponible</div>
<div class="u" style="left:742px;width:200px;top:434px;font-size:18.2px">Perímetro ZBE (km)</div>
<div class="u" style="left:984px;width:200px;top:433px;font-size:18.1px">Superficie ZBE (km²)</div>
<div class="b" style="left:746px;width:200px;top:490.5px">Perímetro de la ZBE</div>
<div class="b" style="left:988px;width:200px;top:489.5px">Superficie total de la ZBE</div>
<div class="btn" style="left:1017.5px;top:565px;width:162px;height:44.2px;line-height:44.6px;padding-left:1px">Normativa</div>
<div class="btn" style="left:1018px;top:616.4px;width:160px;height:45.2px;line-height:45.5px;padding-left:3px">Web municipal</div>
</body>
</html>
